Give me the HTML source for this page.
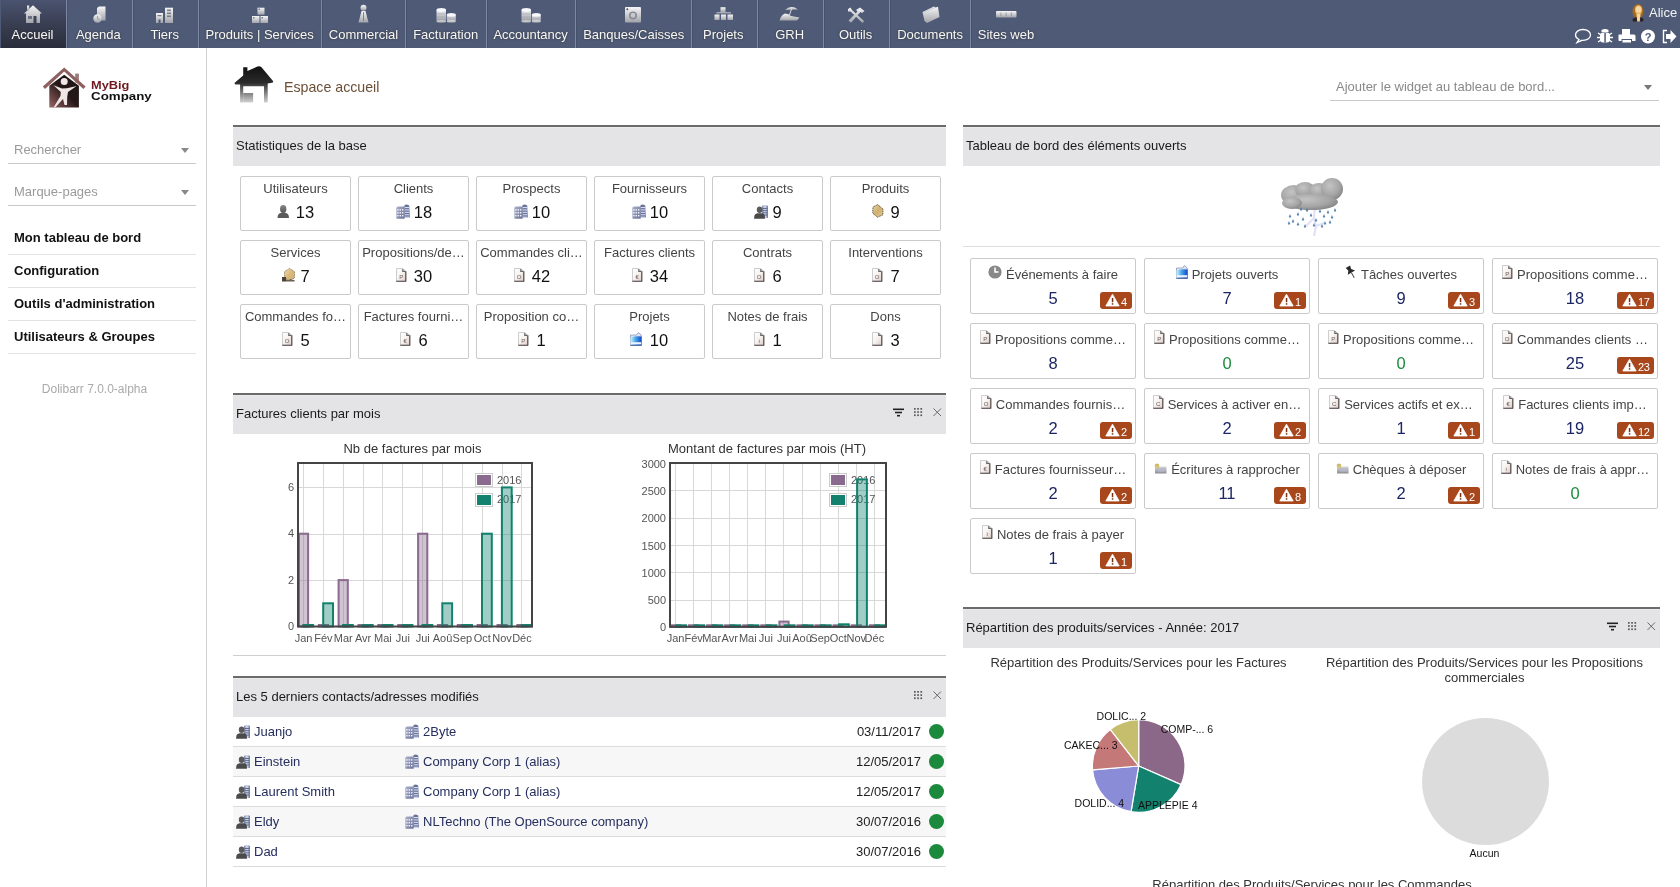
<!DOCTYPE html><html><head><meta charset="utf-8"><style>
html,body{margin:0;padding:0;width:1680px;height:887px;overflow:hidden;background:#fff;font-family:"Liberation Sans",sans-serif;}
.t{position:absolute;line-height:1;white-space:nowrap;}
.b{position:absolute;box-sizing:border-box;}
.s{position:absolute;overflow:visible;}
.ell{overflow:hidden;text-overflow:ellipsis;}
</style></head><body><div style="position:absolute;left:0;top:0;width:1680px;height:887px;overflow:hidden;will-change:transform;background:#fff">
<div class="b" style="left:0px;top:0px;width:1680px;height:48px;background:#4e5a76;"></div>
<div class="b" style="left:1px;top:0px;width:65px;height:48px;background:linear-gradient(#4a5370,#393e52 50%,#2a2e3b);"></div>
<div class="t" style="left:-67.50px;width:200px;text-align:center;top:28.00px;font-size:13px;color:#f8f8f8;font-weight:400;text-shadow:0 0 2px #333;">Accueil</div>
<div class="b" style="left:66px;top:0px;width:1px;height:48px;background:#7c87a2;"></div>
<div class="b" style="left:67px;top:0px;width:1px;height:48px;background:#46516b;"></div>
<div class="t" style="left:-1.70px;width:200px;text-align:center;top:28.00px;font-size:13px;color:#f8f8f8;font-weight:400;text-shadow:0 0 2px #333;">Agenda</div>
<div class="b" style="left:132px;top:0px;width:1px;height:48px;background:#7c87a2;"></div>
<div class="b" style="left:133px;top:0px;width:1px;height:48px;background:#46516b;"></div>
<div class="t" style="left:64.70px;width:200px;text-align:center;top:28.00px;font-size:13px;color:#f8f8f8;font-weight:400;text-shadow:0 0 2px #333;">Tiers</div>
<div class="b" style="left:198px;top:0px;width:1px;height:48px;background:#7c87a2;"></div>
<div class="b" style="left:199px;top:0px;width:1px;height:48px;background:#46516b;"></div>
<div class="t" style="left:159.70px;width:200px;text-align:center;top:28.00px;font-size:13px;color:#f8f8f8;font-weight:400;text-shadow:0 0 2px #333;">Produits | Services</div>
<div class="b" style="left:321px;top:0px;width:1px;height:48px;background:#7c87a2;"></div>
<div class="b" style="left:322px;top:0px;width:1px;height:48px;background:#46516b;"></div>
<div class="t" style="left:263.50px;width:200px;text-align:center;top:28.00px;font-size:13px;color:#f8f8f8;font-weight:400;text-shadow:0 0 2px #333;">Commercial</div>
<div class="b" style="left:405px;top:0px;width:1px;height:48px;background:#7c87a2;"></div>
<div class="b" style="left:406px;top:0px;width:1px;height:48px;background:#46516b;"></div>
<div class="t" style="left:345.70px;width:200px;text-align:center;top:28.00px;font-size:13px;color:#f8f8f8;font-weight:400;text-shadow:0 0 2px #333;">Facturation</div>
<div class="b" style="left:486px;top:0px;width:1px;height:48px;background:#7c87a2;"></div>
<div class="b" style="left:487px;top:0px;width:1px;height:48px;background:#46516b;"></div>
<div class="t" style="left:430.60px;width:200px;text-align:center;top:28.00px;font-size:13px;color:#f8f8f8;font-weight:400;text-shadow:0 0 2px #333;">Accountancy</div>
<div class="b" style="left:575px;top:0px;width:1px;height:48px;background:#7c87a2;"></div>
<div class="b" style="left:576px;top:0px;width:1px;height:48px;background:#46516b;"></div>
<div class="t" style="left:533.75px;width:200px;text-align:center;top:28.00px;font-size:13px;color:#f8f8f8;font-weight:400;text-shadow:0 0 2px #333;">Banques/Caisses</div>
<div class="b" style="left:691px;top:0px;width:1px;height:48px;background:#7c87a2;"></div>
<div class="b" style="left:692px;top:0px;width:1px;height:48px;background:#46516b;"></div>
<div class="t" style="left:623.25px;width:200px;text-align:center;top:28.00px;font-size:13px;color:#f8f8f8;font-weight:400;text-shadow:0 0 2px #333;">Projets</div>
<div class="b" style="left:757px;top:0px;width:1px;height:48px;background:#7c87a2;"></div>
<div class="b" style="left:758px;top:0px;width:1px;height:48px;background:#46516b;"></div>
<div class="t" style="left:689.60px;width:200px;text-align:center;top:28.00px;font-size:13px;color:#f8f8f8;font-weight:400;text-shadow:0 0 2px #333;">GRH</div>
<div class="b" style="left:823px;top:0px;width:1px;height:48px;background:#7c87a2;"></div>
<div class="b" style="left:824px;top:0px;width:1px;height:48px;background:#46516b;"></div>
<div class="t" style="left:755.60px;width:200px;text-align:center;top:28.00px;font-size:13px;color:#f8f8f8;font-weight:400;text-shadow:0 0 2px #333;">Outils</div>
<div class="b" style="left:889px;top:0px;width:1px;height:48px;background:#7c87a2;"></div>
<div class="b" style="left:890px;top:0px;width:1px;height:48px;background:#46516b;"></div>
<div class="t" style="left:830.10px;width:200px;text-align:center;top:28.00px;font-size:13px;color:#f8f8f8;font-weight:400;text-shadow:0 0 2px #333;">Documents</div>
<div class="b" style="left:970px;top:0px;width:1px;height:48px;background:#7c87a2;"></div>
<div class="b" style="left:971px;top:0px;width:1px;height:48px;background:#46516b;"></div>
<div class="t" style="left:906.00px;width:200px;text-align:center;top:28.00px;font-size:13px;color:#f8f8f8;font-weight:400;text-shadow:0 0 2px #333;">Sites web</div>
<svg class="s" style="left:0;top:0" width="1100" height="28" viewBox="0 0 1100 28">
<defs><linearGradient id="mg" x1="0" y1="0" x2="0" y2="1"><stop offset="0" stop-color="#f6f6f6"/><stop offset="1" stop-color="#a2a4aa"/></linearGradient>
<linearGradient id="mg2" x1="0" y1="0" x2="0" y2="1"><stop offset="0" stop-color="#f0f0f0"/><stop offset="1" stop-color="#9c9ea4"/></linearGradient></defs>
<g fill="url(#mg)">
<!-- house -->
<path d="M24 13.5 L33 5.2 L42 13.5 L40 13.5 L40 23 L36.5 23 L36.5 16 L33.5 16 L33.5 23 L26 23 L26 13.5 Z"/>
<rect x="27" y="5.5" width="2.2" height="5"/>
</g>
<rect x="28" y="16" width="4" height="3" fill="#6a7088"/>
<!-- agenda -->
<g fill="url(#mg)"><path d="M97 8 L99 6.5 L105.5 6.5 L105.5 20.5 L97 20.5 Z"/><circle cx="97.5" cy="18.5" r="4.2"/></g>
<path d="M97.5 15.8 L97.5 18.6 L99.5 19.6" stroke="#8a8e98" stroke-width=".8" fill="none"/>
<!-- tiers -->
<g fill="url(#mg)"><path d="M156 13 L163 13 L163 23 L160.5 23 L160.5 19.5 L158.5 19.5 L158.5 23 L156 23 Z"/><rect x="165" y="7.7" width="8" height="15.3"/></g>
<g fill="#7a7e8a"><rect x="157.5" y="15" width="4" height="1.2"/><rect x="167" y="9.5" width="4" height="1.6"/><rect x="167" y="12.5" width="4" height="1.6"/><rect x="167" y="15.5" width="4" height="1.6"/></g>
<!-- produits -->
<g fill="url(#mg)"><rect x="257.5" y="7.7" width="7" height="7"/><rect x="252" y="16" width="7.5" height="7"/><rect x="260.5" y="16" width="7.5" height="7"/></g>
<g fill="#7a7e8a"><rect x="258.5" y="8.5" width="1.5" height="1.5"/><rect x="253" y="17" width="1.5" height="1.5"/><rect x="261.5" y="17" width="1.5" height="1.5"/></g>
<!-- commercial -->
<g fill="url(#mg)"><circle cx="363.5" cy="7.8" r="3"/><path d="M361.5 11 L365.5 11 L368.5 22.5 L358.5 22.5 Z"/></g>
<path d="M363.5 12 L363.5 21" stroke="#6a6e7a" stroke-width=".8"/>
<!-- coins -->
<g fill="url(#mg)" opacity=".92"><rect x="436.5" y="10" width="9.5" height="11.5"/><ellipse cx="441.25" cy="21.5" rx="4.75" ry="1.2"/><rect x="446.8" y="14.8" width="9" height="6.7"/><ellipse cx="451.3" cy="21.5" rx="4.5" ry="1.2"/>
<rect x="521.5" y="10" width="9.5" height="11.5"/><ellipse cx="526.25" cy="21.5" rx="4.75" ry="1.2"/><rect x="531.8" y="14.8" width="9" height="6.7"/><ellipse cx="536.3" cy="21.5" rx="4.5" ry="1.2"/></g>
<g fill="#f6f8fc"><ellipse cx="441.25" cy="10" rx="4.75" ry="1.9"/><ellipse cx="451.3" cy="14.8" rx="4.5" ry="1.8"/><ellipse cx="526.25" cy="10" rx="4.75" ry="1.9"/><ellipse cx="536.3" cy="14.8" rx="4.5" ry="1.8"/></g>
<g stroke="#8a8e9a" stroke-width=".5" opacity=".7"><path d="M437 14 L445.5 14 M437 17 L445.5 17 M437 20 L445.5 20 M447.3 18 L455.3 18 M522 14 L530.5 14 M522 17 L530.5 17 M522 20 L530.5 20 M532.3 18 L540.3 18"/></g>
<!-- banques -->
<rect x="625" y="7" width="16" height="15.5" rx="1" fill="url(#mg)"/>
<circle cx="633" cy="15.5" r="3.2" fill="none" stroke="#888c96" stroke-width="1.6"/>
<circle cx="627.3" cy="9.3" r="1" fill="#555"/>
<!-- projets -->
<g fill="url(#mg)"><rect x="720.5" y="7.2" width="5" height="5"/><rect x="714.5" y="14.5" width="5" height="5.5"/><rect x="721" y="14.5" width="5" height="5.5"/><rect x="727.5" y="14.5" width="5.5" height="5.5"/><rect x="716.5" y="12.5" width="14.5" height="1"/></g>
<!-- grh -->
<g fill="url(#mg)"><path d="M785 10 Q791 4.5 798 9.5 Z"/><path d="M779.5 20.5 Q781 15 785 13.5 Q789 13.5 791 16 L799.5 17.5 L797 20.5 Z"/></g>
<path d="M791.5 9 L789.5 15" stroke="#e8e8e8" stroke-width=".9"/>
<!-- outils -->
<g fill="url(#mg)"><path d="M848 9 L850.5 7.5 L852 10 L864 21 L862.5 23 L850.5 11.5 L848 11.5 Z"/><path d="M853 16 L857.5 11.5 L856 10 L860 7.5 L864.5 11 L862 13 L860.5 12 L856 17 L851 22.8 L848.5 20.5 Z"/></g>
<!-- documents -->
<path d="M922.5 12 L934 6.5 L935.5 7.5 L938 6.8 L939.5 17 L927 23 L924.5 21 Z" fill="url(#mg)"/>
<path d="M923 12.5 L935 7.5" stroke="#c8c8cc" stroke-width=".8"/>
<!-- www -->
<rect x="996" y="11" width="20.5" height="6.5" rx="1" fill="url(#mg)"/>
<g fill="#8a8e98"><rect x="1000.5" y="12.5" width=".8" height="4"/><rect x="1005.7" y="12.5" width=".8" height="4"/><rect x="1010.9" y="12.5" width=".8" height="4"/></g>
</svg>
<div class="t" style="left:1649px;top:6.00px;font-size:13px;color:#f4f4f4;font-weight:400;">Alice</div>
<svg class="s" style="left:1631px;top:3px" width="14" height="19" viewBox="0 0 14 19"><defs><filter id="bl"><feGaussianBlur stdDeviation=".6"/></filter></defs><g filter="url(#bl)">
<ellipse cx="7" cy="8.5" rx="5.5" ry="7.5" fill="#a8681e"/>
<ellipse cx="7.5" cy="7" rx="3.6" ry="4.8" fill="#e6b868"/>
<path d="M1.5 16 Q4 14 6 14 L8.5 14 Q11 14 12.5 16 L12 18.5 L2 18.5 Z" fill="#2a2226"/>
<path d="M5.5 11 L9.5 11 L8.8 18.5 L6.2 18.5 Z" fill="#f0d8a0"/>
<ellipse cx="7.5" cy="6.5" rx="2.6" ry="3.2" fill="#f6d8a4"/>
</g></svg>
<div class="b" style="left:206px;top:48px;width:1px;height:839px;background:#d0d0d0;"></div>
<svg class="s" style="left:42px;top:66px" width="44" height="44" viewBox="0 0 44 44">
<defs><linearGradient id="lg1" x1="1" y1="0" x2="0" y2="1"><stop offset="0" stop-color="#1c1414"/><stop offset=".5" stop-color="#261818"/><stop offset=".8" stop-color="#6a4444"/><stop offset="1" stop-color="#9a6a6a"/></linearGradient></defs>
<rect x="33.2" y="7.6" width="3.7" height="9" fill="#9a7a7a"/>
<path d="M0.8 20.6 L22.2 1.6 L43.6 20.6 L41.4 23 L22.2 5.6 L3 23 Z" fill="#8e6060"/>
<path d="M7.3 19.7 L22.2 8.7 L36.9 19.7 L36.9 41.4 L7.3 41.4 Z" fill="url(#lg1)"/>
<circle cx="22.2" cy="15.4" r="3.5" fill="#f0e6e6"/>
<path d="M11.5 19.2 L20 22.5 L25 22.3 L34.6 20 L26 26 L25.2 31 L25 39 L22.5 39 L21 33 L13.5 41.3 L11.8 41 L18.5 30 L18.8 26 Z" fill="#f0e6e6"/>
</svg>
<div class="t" style="left:91px;top:80.11px;font-size:10.5px;color:#6e1a22;font-weight:700;transform:scaleX(1.22);transform-origin:0 0;">MyBig</div>
<div class="t" style="left:91px;top:91.11px;font-size:10.5px;color:#111;font-weight:700;transform:scaleX(1.27);transform-origin:0 0;">Company</div>
<div class="t" style="left:14px;top:143.00px;font-size:13px;color:#9a9a9a;font-weight:400;">Rechercher</div>
<div class="b" style="left:8px;top:163px;width:188px;height:1px;background:#c9c9c9;"></div>
<div class="b" style="left:181px;top:148px;width:0;height:0;border-left:4px solid transparent;border-right:4px solid transparent;border-top:5px solid #888;"></div>
<div class="t" style="left:14px;top:185.00px;font-size:13px;color:#9a9a9a;font-weight:400;">Marque-pages</div>
<div class="b" style="left:8px;top:205px;width:188px;height:1px;background:#c9c9c9;"></div>
<div class="b" style="left:181px;top:190px;width:0;height:0;border-left:4px solid transparent;border-right:4px solid transparent;border-top:5px solid #888;"></div>
<div class="t" style="left:14px;top:231.00px;font-size:13px;color:#111;font-weight:700;">Mon tableau de bord</div>
<div class="b" style="left:8px;top:254px;width:188px;height:1px;background:#e2e2e2;"></div>
<div class="t" style="left:14px;top:264.00px;font-size:13px;color:#111;font-weight:700;">Configuration</div>
<div class="b" style="left:8px;top:287px;width:188px;height:1px;background:#e2e2e2;"></div>
<div class="t" style="left:14px;top:297.00px;font-size:13px;color:#111;font-weight:700;">Outils d'administration</div>
<div class="b" style="left:8px;top:320px;width:188px;height:1px;background:#e2e2e2;"></div>
<div class="t" style="left:14px;top:330.00px;font-size:13px;color:#111;font-weight:700;">Utilisateurs &amp; Groupes</div>
<div class="b" style="left:8px;top:353px;width:188px;height:1px;background:#e2e2e2;"></div>
<div class="t" style="left:4.50px;width:180px;text-align:center;top:382.84px;font-size:12px;color:#aaaaaa;font-weight:400;">Dolibarr 7.0.0-alpha</div>
<svg class="s" style="left:233px;top:64px" width="42" height="40" viewBox="0 0 42 40">
<defs><linearGradient id="hg" gradientUnits="userSpaceOnUse" x1="0" y1="2" x2="0" y2="39"><stop offset="0" stop-color="#111"/><stop offset=".45" stop-color="#2a2a2a"/><stop offset=".7" stop-color="#777"/><stop offset="1" stop-color="#d4d4d4"/></linearGradient></defs>
<path d="M10.2 3.3 L14.4 3.3 L14.4 7 L24.5 2.6 Q26.4 1.8 28.3 3 L40 17 Q40.6 18.6 39 18.8 L34.7 19.6 L34.7 38.4 L31 38.4 L31 22.3 L10.2 22.3 L10.2 38.4 L7.1 38.4 L7.1 20.5 L2.5 20.5 Q1 20 2 18.6 L10.2 11.5 Z" fill="url(#hg)"/>
<rect x="10.2" y="29" width="9.9" height="9.4" fill="url(#hg)"/>
</svg>
<div class="t" style="left:284px;top:79.98px;font-size:14.2px;color:#6b4f37;font-weight:400;">Espace accueil</div>
<div class="t" style="left:1336px;top:80.30px;font-size:13px;color:#8a8a8a;font-weight:400;">Ajouter le widget au tableau de bord...</div>
<div class="b" style="left:1330px;top:100px;width:329px;height:1px;background:#c9c9c9;"></div>
<div class="b" style="left:1644px;top:85px;width:0;height:0;border-left:4px solid transparent;border-right:4px solid transparent;border-top:5px solid #777;"></div>
<div class="b" style="left:233px;top:125px;width:713px;height:2px;background:#6b6b6b;"></div>
<div class="b" style="left:233px;top:127px;width:713px;height:39px;background:#e4e4e6;"></div>
<div class="b" style="left:233px;top:127px;width:713px;height:1px;background:#ebebed;"></div>
<div class="t" style="left:236px;top:139.00px;font-size:13px;color:#1a1a1a;font-weight:400;">Statistiques de la base</div>
<div class="b" style="left:240px;top:176px;width:111px;height:55px;border:1px solid #cacaca;border-radius:2px;background:#fff;"></div>
<div class="t" style="left:220px;width:151px;text-align:center;top:181.50px;font-size:13px;color:#444;">Utilisateurs</div>
<svg class="s" style="left:277px;top:205px" width="13" height="14" viewBox="0 0 13 14"><defs><linearGradient id="gu" x1="0" y1="0" x2="0" y2="1"><stop offset="0" stop-color="#888"/><stop offset="1" stop-color="#555"/></linearGradient></defs><ellipse cx="6.2" cy="4" rx="3.2" ry="4" fill="url(#gu)"/><path d="M0.5 13 Q0.5 8 4.5 7.8 L8 7.8 Q12 8 12 13 Z" fill="#5a5a5a"/></svg>
<div class="t" style="left:295.82px;top:204.23px;font-size:16.5px;color:#111;font-weight:400;">13</div>
<div class="b" style="left:358px;top:176px;width:111px;height:55px;border:1px solid #cacaca;border-radius:2px;background:#fff;"></div>
<div class="t" style="left:338px;width:151px;text-align:center;top:181.50px;font-size:13px;color:#444;">Clients</div>
<svg class="s" style="left:396px;top:204px" width="14" height="15" viewBox="0 0 14 15"><defs><linearGradient id="gco" x1="0" y1="0" x2="1" y2="1"><stop offset="0" stop-color="#a8aecb"/><stop offset="1" stop-color="#6c7396"/></linearGradient></defs><path d="M8.3 1.6 Q9 0.6 11 0.6 L13.2 1.6 L13.9 13.5 L8.3 13.5 Z" fill="#6a7296"/><rect x="8.8" y="3.0" width="4.4" height="1.1" fill="#d4dcf8"/><rect x="8.8" y="5.4" width="4.4" height="1.1" fill="#d4dcf8"/><rect x="8.8" y="7.8" width="4.4" height="1.1" fill="#d4dcf8"/><rect x="8.8" y="10.2" width="4.4" height="1.1" fill="#d4dcf8"/><rect x="8.8" y="12.6" width="4.4" height="1.1" fill="#d4dcf8"/><path d="M0.3 4 Q0.5 2.8 2 2.6 L8.6 2.6 L8.6 14.7 L0.5 14.7 Z" fill="url(#gco)"/><rect x="1.2" y="5.2" width="1.4" height="1.4" fill="#f4f6ff"/><rect x="1.2" y="8.1" width="1.4" height="1.4" fill="#f4f6ff"/><rect x="1.2" y="11.0" width="1.4" height="1.4" fill="#f4f6ff"/><rect x="3.6" y="5.2" width="1.4" height="1.4" fill="#f4f6ff"/><rect x="3.6" y="8.1" width="1.4" height="1.4" fill="#f4f6ff"/><rect x="3.6" y="11.0" width="1.4" height="1.4" fill="#f4f6ff"/><rect x="6.0" y="5.2" width="1.4" height="1.4" fill="#f4f6ff"/><rect x="6.0" y="8.1" width="1.4" height="1.4" fill="#f4f6ff"/><rect x="6.0" y="11.0" width="1.4" height="1.4" fill="#f4f6ff"/></svg>
<div class="t" style="left:413.82px;top:204.23px;font-size:16.5px;color:#111;font-weight:400;">18</div>
<div class="b" style="left:476px;top:176px;width:111px;height:55px;border:1px solid #cacaca;border-radius:2px;background:#fff;"></div>
<div class="t" style="left:456px;width:151px;text-align:center;top:181.50px;font-size:13px;color:#444;">Prospects</div>
<svg class="s" style="left:514px;top:204px" width="14" height="15" viewBox="0 0 14 15"><defs><linearGradient id="gco" x1="0" y1="0" x2="1" y2="1"><stop offset="0" stop-color="#a8aecb"/><stop offset="1" stop-color="#6c7396"/></linearGradient></defs><path d="M8.3 1.6 Q9 0.6 11 0.6 L13.2 1.6 L13.9 13.5 L8.3 13.5 Z" fill="#6a7296"/><rect x="8.8" y="3.0" width="4.4" height="1.1" fill="#d4dcf8"/><rect x="8.8" y="5.4" width="4.4" height="1.1" fill="#d4dcf8"/><rect x="8.8" y="7.8" width="4.4" height="1.1" fill="#d4dcf8"/><rect x="8.8" y="10.2" width="4.4" height="1.1" fill="#d4dcf8"/><rect x="8.8" y="12.6" width="4.4" height="1.1" fill="#d4dcf8"/><path d="M0.3 4 Q0.5 2.8 2 2.6 L8.6 2.6 L8.6 14.7 L0.5 14.7 Z" fill="url(#gco)"/><rect x="1.2" y="5.2" width="1.4" height="1.4" fill="#f4f6ff"/><rect x="1.2" y="8.1" width="1.4" height="1.4" fill="#f4f6ff"/><rect x="1.2" y="11.0" width="1.4" height="1.4" fill="#f4f6ff"/><rect x="3.6" y="5.2" width="1.4" height="1.4" fill="#f4f6ff"/><rect x="3.6" y="8.1" width="1.4" height="1.4" fill="#f4f6ff"/><rect x="3.6" y="11.0" width="1.4" height="1.4" fill="#f4f6ff"/><rect x="6.0" y="5.2" width="1.4" height="1.4" fill="#f4f6ff"/><rect x="6.0" y="8.1" width="1.4" height="1.4" fill="#f4f6ff"/><rect x="6.0" y="11.0" width="1.4" height="1.4" fill="#f4f6ff"/></svg>
<div class="t" style="left:531.82px;top:204.23px;font-size:16.5px;color:#111;font-weight:400;">10</div>
<div class="b" style="left:594px;top:176px;width:111px;height:55px;border:1px solid #cacaca;border-radius:2px;background:#fff;"></div>
<div class="t" style="left:574px;width:151px;text-align:center;top:181.50px;font-size:13px;color:#444;">Fournisseurs</div>
<svg class="s" style="left:632px;top:204px" width="14" height="15" viewBox="0 0 14 15"><defs><linearGradient id="gco" x1="0" y1="0" x2="1" y2="1"><stop offset="0" stop-color="#a8aecb"/><stop offset="1" stop-color="#6c7396"/></linearGradient></defs><path d="M8.3 1.6 Q9 0.6 11 0.6 L13.2 1.6 L13.9 13.5 L8.3 13.5 Z" fill="#6a7296"/><rect x="8.8" y="3.0" width="4.4" height="1.1" fill="#d4dcf8"/><rect x="8.8" y="5.4" width="4.4" height="1.1" fill="#d4dcf8"/><rect x="8.8" y="7.8" width="4.4" height="1.1" fill="#d4dcf8"/><rect x="8.8" y="10.2" width="4.4" height="1.1" fill="#d4dcf8"/><rect x="8.8" y="12.6" width="4.4" height="1.1" fill="#d4dcf8"/><path d="M0.3 4 Q0.5 2.8 2 2.6 L8.6 2.6 L8.6 14.7 L0.5 14.7 Z" fill="url(#gco)"/><rect x="1.2" y="5.2" width="1.4" height="1.4" fill="#f4f6ff"/><rect x="1.2" y="8.1" width="1.4" height="1.4" fill="#f4f6ff"/><rect x="1.2" y="11.0" width="1.4" height="1.4" fill="#f4f6ff"/><rect x="3.6" y="5.2" width="1.4" height="1.4" fill="#f4f6ff"/><rect x="3.6" y="8.1" width="1.4" height="1.4" fill="#f4f6ff"/><rect x="3.6" y="11.0" width="1.4" height="1.4" fill="#f4f6ff"/><rect x="6.0" y="5.2" width="1.4" height="1.4" fill="#f4f6ff"/><rect x="6.0" y="8.1" width="1.4" height="1.4" fill="#f4f6ff"/><rect x="6.0" y="11.0" width="1.4" height="1.4" fill="#f4f6ff"/></svg>
<div class="t" style="left:649.82px;top:204.23px;font-size:16.5px;color:#111;font-weight:400;">10</div>
<div class="b" style="left:712px;top:176px;width:111px;height:55px;border:1px solid #cacaca;border-radius:2px;background:#fff;"></div>
<div class="t" style="left:692px;width:151px;text-align:center;top:181.50px;font-size:13px;color:#444;">Contacts</div>
<svg class="s" style="left:754px;top:204px" width="15" height="15" viewBox="0 0 15 15"><defs><linearGradient id="gc" x1="0" y1="0" x2="1" y2="0"><stop offset="0" stop-color="#7a86a8"/><stop offset=".5" stop-color="#d8e0f0"/><stop offset="1" stop-color="#6a7698"/></linearGradient></defs><path d="M8 2 Q11 0 14 2 L14 14 L8 14 Z" fill="url(#gc)"/><g fill="#5a6688"><rect x="8.5" y="4" width="5" height=".9"/><rect x="8.5" y="6.2" width="5" height=".9"/><rect x="8.5" y="8.4" width="5" height=".9"/><rect x="8.5" y="10.6" width="5" height=".9"/></g><ellipse cx="5.6" cy="5.8" rx="2.8" ry="3.3" fill="#5a5a5a"/><path d="M0 14.8 L0.5 11.5 Q1 9.5 3.5 9.3 L8 9.3 Q10.5 9.5 10.8 11.5 L11 14.8 Z" fill="#4a4a4a"/></svg>
<div class="t" style="left:772.41px;top:204.23px;font-size:16.5px;color:#111;font-weight:400;">9</div>
<div class="b" style="left:830px;top:176px;width:111px;height:55px;border:1px solid #cacaca;border-radius:2px;background:#fff;"></div>
<div class="t" style="left:810px;width:151px;text-align:center;top:181.50px;font-size:13px;color:#444;">Produits</div>
<svg class="s" style="left:872px;top:204px" width="12" height="14" viewBox="0 0 12 14"><defs><linearGradient id="gpr" x1="0" y1="0" x2="1" y2="1"><stop offset="0" stop-color="#e4d4a4"/><stop offset=".5" stop-color="#d0b070"/><stop offset="1" stop-color="#e0cc98"/></linearGradient></defs><path d="M5.7 0.6 L11 5 L10.8 10.9 L5.4 13.2 L0.7 9.2 L1 2.9 Z" fill="url(#gpr)" stroke="#3a3020" stroke-width=".8" stroke-dasharray="1.1 .7"/></svg>
<div class="t" style="left:890.41px;top:204.23px;font-size:16.5px;color:#111;font-weight:400;">9</div>
<div class="b" style="left:240px;top:240px;width:111px;height:55px;border:1px solid #cacaca;border-radius:2px;background:#fff;"></div>
<div class="t" style="left:220px;width:151px;text-align:center;top:245.50px;font-size:13px;color:#444;">Services</div>
<svg class="s" style="left:282px;top:268px" width="14" height="14" viewBox="0 0 14 14"><defs><linearGradient id="gs" x1="0" y1="0" x2="1" y2="1"><stop offset="0" stop-color="#eee0b0"/><stop offset=".5" stop-color="#dcb878"/><stop offset="1" stop-color="#c8b078"/></linearGradient></defs><path d="M7.5 0.5 L12.5 3.5 L12.5 10 L7.5 12.5 L2.5 10 L2.5 3.5 Z" fill="url(#gs)" stroke="#5a4a30" stroke-width=".6" stroke-dasharray="1 .6"/><rect x="0" y="9" width="4" height="4.5" fill="#4a4438"/><path d="M4 11.5 Q7 12.5 8.5 11 Q10 12 12.8 12.3 L12.5 13.5 L4 13.5 Z" fill="#6a6050"/></svg>
<div class="t" style="left:300.41px;top:268.23px;font-size:16.5px;color:#111;font-weight:400;">7</div>
<div class="b" style="left:358px;top:240px;width:111px;height:55px;border:1px solid #cacaca;border-radius:2px;background:#fff;"></div>
<div class="t" style="left:338px;width:151px;text-align:center;top:245.50px;font-size:13px;color:#444;">Propositions/de…</div>
<svg class="s" style="left:396px;top:268px" width="11" height="14" viewBox="0 0 11 14"><defs><linearGradient id="gd" x1="0" y1="0" x2="1" y2="1"><stop offset="0" stop-color="#ffffff"/><stop offset=".5" stop-color="#f6f2f0"/><stop offset="1" stop-color="#dccbc4"/></linearGradient></defs><path d="M0.5 0.5 L6.8 0.5 L9.8 3.5 L9.8 13.2 L0.5 13.2 Z" fill="url(#gd)" stroke="#cdcdcd" stroke-width="1"/><path d="M9.8 3.2 L9.8 13.3 L0.3 13.3" stroke="#4e4040" stroke-width="1.1" fill="none"/><path d="M6.8 1 L6.8 3.3 L9.3 3.3" stroke="#666" stroke-width="1.2" fill="none"/><text x="5.2" y="11.2" font-size="6" font-family="Liberation Sans" fill="#6a5a55" text-anchor="middle">P</text></svg>
<div class="t" style="left:413.82px;top:268.23px;font-size:16.5px;color:#111;font-weight:400;">30</div>
<div class="b" style="left:476px;top:240px;width:111px;height:55px;border:1px solid #cacaca;border-radius:2px;background:#fff;"></div>
<div class="t" style="left:456px;width:151px;text-align:center;top:245.50px;font-size:13px;color:#444;">Commandes cli…</div>
<svg class="s" style="left:514px;top:268px" width="11" height="14" viewBox="0 0 11 14"><defs><linearGradient id="gd" x1="0" y1="0" x2="1" y2="1"><stop offset="0" stop-color="#ffffff"/><stop offset=".5" stop-color="#f6f2f0"/><stop offset="1" stop-color="#dccbc4"/></linearGradient></defs><path d="M0.5 0.5 L6.8 0.5 L9.8 3.5 L9.8 13.2 L0.5 13.2 Z" fill="url(#gd)" stroke="#cdcdcd" stroke-width="1"/><path d="M9.8 3.2 L9.8 13.3 L0.3 13.3" stroke="#4e4040" stroke-width="1.1" fill="none"/><path d="M6.8 1 L6.8 3.3 L9.3 3.3" stroke="#666" stroke-width="1.2" fill="none"/><text x="5.2" y="11.2" font-size="6" font-family="Liberation Sans" fill="#6a5a55" text-anchor="middle">O</text></svg>
<div class="t" style="left:531.82px;top:268.23px;font-size:16.5px;color:#111;font-weight:400;">42</div>
<div class="b" style="left:594px;top:240px;width:111px;height:55px;border:1px solid #cacaca;border-radius:2px;background:#fff;"></div>
<div class="t" style="left:574px;width:151px;text-align:center;top:245.50px;font-size:13px;color:#444;">Factures clients</div>
<svg class="s" style="left:632px;top:268px" width="11" height="14" viewBox="0 0 11 14"><defs><linearGradient id="gd" x1="0" y1="0" x2="1" y2="1"><stop offset="0" stop-color="#ffffff"/><stop offset=".5" stop-color="#f6f2f0"/><stop offset="1" stop-color="#dccbc4"/></linearGradient></defs><path d="M0.5 0.5 L6.8 0.5 L9.8 3.5 L9.8 13.2 L0.5 13.2 Z" fill="url(#gd)" stroke="#cdcdcd" stroke-width="1"/><path d="M9.8 3.2 L9.8 13.3 L0.3 13.3" stroke="#4e4040" stroke-width="1.1" fill="none"/><path d="M6.8 1 L6.8 3.3 L9.3 3.3" stroke="#666" stroke-width="1.2" fill="none"/><text x="5.2" y="11.2" font-size="6" font-family="Liberation Sans" fill="#6a5a55" text-anchor="middle">€</text></svg>
<div class="t" style="left:649.82px;top:268.23px;font-size:16.5px;color:#111;font-weight:400;">34</div>
<div class="b" style="left:712px;top:240px;width:111px;height:55px;border:1px solid #cacaca;border-radius:2px;background:#fff;"></div>
<div class="t" style="left:692px;width:151px;text-align:center;top:245.50px;font-size:13px;color:#444;">Contrats</div>
<svg class="s" style="left:754px;top:268px" width="11" height="14" viewBox="0 0 11 14"><defs><linearGradient id="gd" x1="0" y1="0" x2="1" y2="1"><stop offset="0" stop-color="#ffffff"/><stop offset=".5" stop-color="#f6f2f0"/><stop offset="1" stop-color="#dccbc4"/></linearGradient></defs><path d="M0.5 0.5 L6.8 0.5 L9.8 3.5 L9.8 13.2 L0.5 13.2 Z" fill="url(#gd)" stroke="#cdcdcd" stroke-width="1"/><path d="M9.8 3.2 L9.8 13.3 L0.3 13.3" stroke="#4e4040" stroke-width="1.1" fill="none"/><path d="M6.8 1 L6.8 3.3 L9.3 3.3" stroke="#666" stroke-width="1.2" fill="none"/><text x="5.2" y="11.2" font-size="6" font-family="Liberation Sans" fill="#6a5a55" text-anchor="middle">O</text></svg>
<div class="t" style="left:772.41px;top:268.23px;font-size:16.5px;color:#111;font-weight:400;">6</div>
<div class="b" style="left:830px;top:240px;width:111px;height:55px;border:1px solid #cacaca;border-radius:2px;background:#fff;"></div>
<div class="t" style="left:810px;width:151px;text-align:center;top:245.50px;font-size:13px;color:#444;">Interventions</div>
<svg class="s" style="left:872px;top:268px" width="11" height="14" viewBox="0 0 11 14"><defs><linearGradient id="gd" x1="0" y1="0" x2="1" y2="1"><stop offset="0" stop-color="#ffffff"/><stop offset=".5" stop-color="#f6f2f0"/><stop offset="1" stop-color="#dccbc4"/></linearGradient></defs><path d="M0.5 0.5 L6.8 0.5 L9.8 3.5 L9.8 13.2 L0.5 13.2 Z" fill="url(#gd)" stroke="#cdcdcd" stroke-width="1"/><path d="M9.8 3.2 L9.8 13.3 L0.3 13.3" stroke="#4e4040" stroke-width="1.1" fill="none"/><path d="M6.8 1 L6.8 3.3 L9.3 3.3" stroke="#666" stroke-width="1.2" fill="none"/><text x="5.2" y="11.2" font-size="6" font-family="Liberation Sans" fill="#6a5a55" text-anchor="middle">O</text></svg>
<div class="t" style="left:890.41px;top:268.23px;font-size:16.5px;color:#111;font-weight:400;">7</div>
<div class="b" style="left:240px;top:304px;width:111px;height:55px;border:1px solid #cacaca;border-radius:2px;background:#fff;"></div>
<div class="t" style="left:220px;width:151px;text-align:center;top:309.50px;font-size:13px;color:#444;">Commandes fo…</div>
<svg class="s" style="left:282px;top:332px" width="11" height="14" viewBox="0 0 11 14"><defs><linearGradient id="gd" x1="0" y1="0" x2="1" y2="1"><stop offset="0" stop-color="#ffffff"/><stop offset=".5" stop-color="#f6f2f0"/><stop offset="1" stop-color="#dccbc4"/></linearGradient></defs><path d="M0.5 0.5 L6.8 0.5 L9.8 3.5 L9.8 13.2 L0.5 13.2 Z" fill="url(#gd)" stroke="#cdcdcd" stroke-width="1"/><path d="M9.8 3.2 L9.8 13.3 L0.3 13.3" stroke="#4e4040" stroke-width="1.1" fill="none"/><path d="M6.8 1 L6.8 3.3 L9.3 3.3" stroke="#666" stroke-width="1.2" fill="none"/><text x="5.2" y="11.2" font-size="6" font-family="Liberation Sans" fill="#6a5a55" text-anchor="middle">O</text></svg>
<div class="t" style="left:300.41px;top:332.23px;font-size:16.5px;color:#111;font-weight:400;">5</div>
<div class="b" style="left:358px;top:304px;width:111px;height:55px;border:1px solid #cacaca;border-radius:2px;background:#fff;"></div>
<div class="t" style="left:338px;width:151px;text-align:center;top:309.50px;font-size:13px;color:#444;">Factures fourni…</div>
<svg class="s" style="left:400px;top:332px" width="11" height="14" viewBox="0 0 11 14"><defs><linearGradient id="gd" x1="0" y1="0" x2="1" y2="1"><stop offset="0" stop-color="#ffffff"/><stop offset=".5" stop-color="#f6f2f0"/><stop offset="1" stop-color="#dccbc4"/></linearGradient></defs><path d="M0.5 0.5 L6.8 0.5 L9.8 3.5 L9.8 13.2 L0.5 13.2 Z" fill="url(#gd)" stroke="#cdcdcd" stroke-width="1"/><path d="M9.8 3.2 L9.8 13.3 L0.3 13.3" stroke="#4e4040" stroke-width="1.1" fill="none"/><path d="M6.8 1 L6.8 3.3 L9.3 3.3" stroke="#666" stroke-width="1.2" fill="none"/><text x="5.2" y="11.2" font-size="6" font-family="Liberation Sans" fill="#6a5a55" text-anchor="middle">€</text></svg>
<div class="t" style="left:418.41px;top:332.23px;font-size:16.5px;color:#111;font-weight:400;">6</div>
<div class="b" style="left:476px;top:304px;width:111px;height:55px;border:1px solid #cacaca;border-radius:2px;background:#fff;"></div>
<div class="t" style="left:456px;width:151px;text-align:center;top:309.50px;font-size:13px;color:#444;">Proposition co…</div>
<svg class="s" style="left:518px;top:332px" width="11" height="14" viewBox="0 0 11 14"><defs><linearGradient id="gd" x1="0" y1="0" x2="1" y2="1"><stop offset="0" stop-color="#ffffff"/><stop offset=".5" stop-color="#f6f2f0"/><stop offset="1" stop-color="#dccbc4"/></linearGradient></defs><path d="M0.5 0.5 L6.8 0.5 L9.8 3.5 L9.8 13.2 L0.5 13.2 Z" fill="url(#gd)" stroke="#cdcdcd" stroke-width="1"/><path d="M9.8 3.2 L9.8 13.3 L0.3 13.3" stroke="#4e4040" stroke-width="1.1" fill="none"/><path d="M6.8 1 L6.8 3.3 L9.3 3.3" stroke="#666" stroke-width="1.2" fill="none"/><text x="5.2" y="11.2" font-size="6" font-family="Liberation Sans" fill="#6a5a55" text-anchor="middle">P</text></svg>
<div class="t" style="left:536.41px;top:332.23px;font-size:16.5px;color:#111;font-weight:400;">1</div>
<div class="b" style="left:594px;top:304px;width:111px;height:55px;border:1px solid #cacaca;border-radius:2px;background:#fff;"></div>
<div class="t" style="left:574px;width:151px;text-align:center;top:309.50px;font-size:13px;color:#444;">Projets</div>
<svg class="s" style="left:630px;top:332px" width="12" height="14" viewBox="0 0 12 14"><defs><linearGradient id="gp" x1="0" y1="0" x2="1" y2="0"><stop offset="0" stop-color="#c8f4ff"/><stop offset=".45" stop-color="#4aa8e8"/><stop offset="1" stop-color="#1048c8"/></linearGradient></defs><path d="M0.5 3 L6.5 3 L8.3 0.6 L10.5 2.2 L11.5 4 L11.5 13.2 L0.5 13.2 Z" fill="#dde4f4" stroke="#6a78a8" stroke-width=".6"/><path d="M0.5 5.5 Q6 3.8 11.5 4.6 L11.5 13.2 L0.5 13.2 Z" fill="url(#gp)"/><rect x="0.8" y="10.2" width="10.4" height="2.2" fill="#eef2ff"/><path d="M0.4 13.3 L11.6 13.3" stroke="#4a5a9a" stroke-width="1"/></svg>
<div class="t" style="left:649.82px;top:332.23px;font-size:16.5px;color:#111;font-weight:400;">10</div>
<div class="b" style="left:712px;top:304px;width:111px;height:55px;border:1px solid #cacaca;border-radius:2px;background:#fff;"></div>
<div class="t" style="left:692px;width:151px;text-align:center;top:309.50px;font-size:13px;color:#444;">Notes de frais</div>
<svg class="s" style="left:754px;top:332px" width="11" height="14" viewBox="0 0 11 14"><defs><linearGradient id="gd" x1="0" y1="0" x2="1" y2="1"><stop offset="0" stop-color="#ffffff"/><stop offset=".5" stop-color="#f6f2f0"/><stop offset="1" stop-color="#dccbc4"/></linearGradient></defs><path d="M0.5 0.5 L6.8 0.5 L9.8 3.5 L9.8 13.2 L0.5 13.2 Z" fill="url(#gd)" stroke="#cdcdcd" stroke-width="1"/><path d="M9.8 3.2 L9.8 13.3 L0.3 13.3" stroke="#4e4040" stroke-width="1.1" fill="none"/><path d="M6.8 1 L6.8 3.3 L9.3 3.3" stroke="#666" stroke-width="1.2" fill="none"/><text x="5.2" y="11.2" font-size="6" font-family="Liberation Sans" fill="#6a5a55" text-anchor="middle">i</text></svg>
<div class="t" style="left:772.41px;top:332.23px;font-size:16.5px;color:#111;font-weight:400;">1</div>
<div class="b" style="left:830px;top:304px;width:111px;height:55px;border:1px solid #cacaca;border-radius:2px;background:#fff;"></div>
<div class="t" style="left:810px;width:151px;text-align:center;top:309.50px;font-size:13px;color:#444;">Dons</div>
<svg class="s" style="left:872px;top:332px" width="11" height="14" viewBox="0 0 11 14"><defs><linearGradient id="gd" x1="0" y1="0" x2="1" y2="1"><stop offset="0" stop-color="#ffffff"/><stop offset=".5" stop-color="#f6f2f0"/><stop offset="1" stop-color="#dccbc4"/></linearGradient></defs><path d="M0.5 0.5 L6.8 0.5 L9.8 3.5 L9.8 13.2 L0.5 13.2 Z" fill="url(#gd)" stroke="#cdcdcd" stroke-width="1"/><path d="M9.8 3.2 L9.8 13.3 L0.3 13.3" stroke="#4e4040" stroke-width="1.1" fill="none"/><path d="M6.8 1 L6.8 3.3 L9.3 3.3" stroke="#666" stroke-width="1.2" fill="none"/></svg>
<div class="t" style="left:890.41px;top:332.23px;font-size:16.5px;color:#111;font-weight:400;">3</div>
<div class="b" style="left:233px;top:393px;width:713px;height:2px;background:#6b6b6b;"></div>
<div class="b" style="left:233px;top:395px;width:713px;height:39px;background:#e4e4e6;"></div>
<div class="b" style="left:233px;top:395px;width:713px;height:1px;background:#ebebed;"></div>
<div class="t" style="left:236px;top:407.00px;font-size:13px;color:#1a1a1a;font-weight:400;">Factures clients par mois</div>
<svg class="s" style="left:893px;top:408px" width="11" height="9" viewBox="0 0 11 9"><rect x="0" y="0.5" width="11" height="1.6" fill="#222"/><rect x="2" y="3.7" width="7" height="1.6" fill="#222"/><rect x="4" y="6.9" width="3" height="1.6" fill="#222"/></svg>
<svg class="s" style="left:914px;top:408px" width="9" height="9" viewBox="0 0 9 9"><rect x="0.0" y="0.0" width="1.7" height="1.7" fill="#5a5a5a"/><rect x="0.0" y="3.2" width="1.7" height="1.7" fill="#5a5a5a"/><rect x="0.0" y="6.4" width="1.7" height="1.7" fill="#5a5a5a"/><rect x="3.2" y="0.0" width="1.7" height="1.7" fill="#5a5a5a"/><rect x="3.2" y="3.2" width="1.7" height="1.7" fill="#5a5a5a"/><rect x="3.2" y="6.4" width="1.7" height="1.7" fill="#5a5a5a"/><rect x="6.4" y="0.0" width="1.7" height="1.7" fill="#5a5a5a"/><rect x="6.4" y="3.2" width="1.7" height="1.7" fill="#5a5a5a"/><rect x="6.4" y="6.4" width="1.7" height="1.7" fill="#5a5a5a"/></svg>
<svg class="s" style="left:933px;top:408px" width="9" height="9" viewBox="0 0 9 9"><path d="M0.5 0.5 L8 8 M8 0.5 L0.5 8" stroke="#5a5a5a" stroke-width=".9"/></svg>
<div class="b" style="left:233px;top:655px;width:713px;height:1px;background:#cfcfcf;"></div>
<div class="t" style="left:262.50px;width:300px;text-align:center;top:441.70px;font-size:13px;color:#333;font-weight:400;">Nb de factures par mois</div>
<svg class="s" style="left:0;top:0" width="1680" height="887"><line x1="298" y1="626.5" x2="532" y2="626.5" stroke="#d8d8d8" stroke-width="1"/><line x1="298" y1="580.5" x2="532" y2="580.5" stroke="#d8d8d8" stroke-width="1"/><line x1="298" y1="534.5" x2="532" y2="534.5" stroke="#d8d8d8" stroke-width="1"/><line x1="298" y1="487.5" x2="532" y2="487.5" stroke="#d8d8d8" stroke-width="1"/><line x1="303.5" y1="463" x2="303.5" y2="626.5" stroke="#d8d8d8" stroke-width="1"/><line x1="323.5" y1="463" x2="323.5" y2="626.5" stroke="#d8d8d8" stroke-width="1"/><line x1="343.5" y1="463" x2="343.5" y2="626.5" stroke="#d8d8d8" stroke-width="1"/><line x1="363.5" y1="463" x2="363.5" y2="626.5" stroke="#d8d8d8" stroke-width="1"/><line x1="382.5" y1="463" x2="382.5" y2="626.5" stroke="#d8d8d8" stroke-width="1"/><line x1="402.5" y1="463" x2="402.5" y2="626.5" stroke="#d8d8d8" stroke-width="1"/><line x1="422.5" y1="463" x2="422.5" y2="626.5" stroke="#d8d8d8" stroke-width="1"/><line x1="442.5" y1="463" x2="442.5" y2="626.5" stroke="#d8d8d8" stroke-width="1"/><line x1="462.5" y1="463" x2="462.5" y2="626.5" stroke="#d8d8d8" stroke-width="1"/><line x1="482.5" y1="463" x2="482.5" y2="626.5" stroke="#d8d8d8" stroke-width="1"/><line x1="502.5" y1="463" x2="502.5" y2="626.5" stroke="#d8d8d8" stroke-width="1"/><line x1="521.5" y1="463" x2="521.5" y2="626.5" stroke="#d8d8d8" stroke-width="1"/><rect x="475.5" y="473.5" width="17" height="13" fill="#fff" fill-opacity=".85" stroke="#ccc" stroke-width="1"/><rect x="477.0" y="475" width="14" height="10" fill="#8a6a8e"/><rect x="475.5" y="493.5" width="17" height="13" fill="#fff" fill-opacity=".85" stroke="#ccc" stroke-width="1"/><rect x="477.0" y="495" width="14" height="10" fill="#12826e"/><text x="497.0" y="483.5" font-family="Liberation Sans" font-size="11" fill="#545454">2016</text><text x="497.0" y="503.2" font-family="Liberation Sans" font-size="11" fill="#545454">2017</text><rect x="299.0" y="533.7" width="9.1" height="92.8" fill="#8a6a8e" fill-opacity=".4" stroke="#8a6a8e" stroke-width="2"/><rect x="318.8" y="625.0" width="9.2" height="1.5" fill="#8a6a8e" fill-opacity=".4" stroke="#8a6a8e" stroke-width="2"/><rect x="338.6" y="580.1" width="9.2" height="46.4" fill="#8a6a8e" fill-opacity=".4" stroke="#8a6a8e" stroke-width="2"/><rect x="358.5" y="625.0" width="9.2" height="1.5" fill="#8a6a8e" fill-opacity=".4" stroke="#8a6a8e" stroke-width="2"/><rect x="378.3" y="625.0" width="9.2" height="1.5" fill="#8a6a8e" fill-opacity=".4" stroke="#8a6a8e" stroke-width="2"/><rect x="398.2" y="625.0" width="9.2" height="1.5" fill="#8a6a8e" fill-opacity=".4" stroke="#8a6a8e" stroke-width="2"/><rect x="418.1" y="533.7" width="9.2" height="92.8" fill="#8a6a8e" fill-opacity=".4" stroke="#8a6a8e" stroke-width="2"/><rect x="437.9" y="625.0" width="9.2" height="1.5" fill="#8a6a8e" fill-opacity=".4" stroke="#8a6a8e" stroke-width="2"/><rect x="457.8" y="625.0" width="9.2" height="1.5" fill="#8a6a8e" fill-opacity=".4" stroke="#8a6a8e" stroke-width="2"/><rect x="477.6" y="625.0" width="9.2" height="1.5" fill="#8a6a8e" fill-opacity=".4" stroke="#8a6a8e" stroke-width="2"/><rect x="497.5" y="625.0" width="9.2" height="1.5" fill="#8a6a8e" fill-opacity=".4" stroke="#8a6a8e" stroke-width="2"/><rect x="517.4" y="625.0" width="9.2" height="1.5" fill="#8a6a8e" fill-opacity=".4" stroke="#8a6a8e" stroke-width="2"/><rect x="303.3" y="625.0" width="9.8" height="1.5" fill="#12826e" fill-opacity=".4" stroke="#12826e" stroke-width="2"/><rect x="323.2" y="603.3" width="9.8" height="23.2" fill="#12826e" fill-opacity=".4" stroke="#12826e" stroke-width="2"/><rect x="343.0" y="625.0" width="9.8" height="1.5" fill="#12826e" fill-opacity=".4" stroke="#12826e" stroke-width="2"/><rect x="362.9" y="625.0" width="9.8" height="1.5" fill="#12826e" fill-opacity=".4" stroke="#12826e" stroke-width="2"/><rect x="382.7" y="625.0" width="9.8" height="1.5" fill="#12826e" fill-opacity=".4" stroke="#12826e" stroke-width="2"/><rect x="402.6" y="625.0" width="9.8" height="1.5" fill="#12826e" fill-opacity=".4" stroke="#12826e" stroke-width="2"/><rect x="422.5" y="625.0" width="9.8" height="1.5" fill="#12826e" fill-opacity=".4" stroke="#12826e" stroke-width="2"/><rect x="442.3" y="603.3" width="9.8" height="23.2" fill="#12826e" fill-opacity=".4" stroke="#12826e" stroke-width="2"/><rect x="462.2" y="625.0" width="9.8" height="1.5" fill="#12826e" fill-opacity=".4" stroke="#12826e" stroke-width="2"/><rect x="482.0" y="533.7" width="9.8" height="92.8" fill="#12826e" fill-opacity=".4" stroke="#12826e" stroke-width="2"/><rect x="501.9" y="487.4" width="9.8" height="139.1" fill="#12826e" fill-opacity=".4" stroke="#12826e" stroke-width="2"/><rect x="521.8" y="625.0" width="9.8" height="1.5" fill="#12826e" fill-opacity=".4" stroke="#12826e" stroke-width="2"/><rect x="298" y="463" width="234" height="163.5" fill="none" stroke="#444" stroke-width="2"/></svg>
<div class="t" style="left:254.00px;width:40px;text-align:right;top:621.19px;font-size:11px;color:#545454;font-weight:400;">0</div>
<div class="t" style="left:254.00px;width:40px;text-align:right;top:574.81px;font-size:11px;color:#545454;font-weight:400;">2</div>
<div class="t" style="left:254.00px;width:40px;text-align:right;top:528.42px;font-size:11px;color:#545454;font-weight:400;">4</div>
<div class="t" style="left:254.00px;width:40px;text-align:right;top:482.04px;font-size:11px;color:#545454;font-weight:400;">6</div>
<div class="t" style="left:288.50px;width:30px;text-align:center;top:632.69px;font-size:11px;color:#545454;font-weight:400;">Jan</div>
<div class="t" style="left:308.36px;width:30px;text-align:center;top:632.69px;font-size:11px;color:#545454;font-weight:400;">Fév</div>
<div class="t" style="left:328.22px;width:30px;text-align:center;top:632.69px;font-size:11px;color:#545454;font-weight:400;">Mar</div>
<div class="t" style="left:348.08px;width:30px;text-align:center;top:632.69px;font-size:11px;color:#545454;font-weight:400;">Avr</div>
<div class="t" style="left:367.94px;width:30px;text-align:center;top:632.69px;font-size:11px;color:#545454;font-weight:400;">Mai</div>
<div class="t" style="left:387.80px;width:30px;text-align:center;top:632.69px;font-size:11px;color:#545454;font-weight:400;">Jui</div>
<div class="t" style="left:407.66px;width:30px;text-align:center;top:632.69px;font-size:11px;color:#545454;font-weight:400;">Jui</div>
<div class="t" style="left:427.52px;width:30px;text-align:center;top:632.69px;font-size:11px;color:#545454;font-weight:400;">Aoû</div>
<div class="t" style="left:447.38px;width:30px;text-align:center;top:632.69px;font-size:11px;color:#545454;font-weight:400;">Sep</div>
<div class="t" style="left:467.24px;width:30px;text-align:center;top:632.69px;font-size:11px;color:#545454;font-weight:400;">Oct</div>
<div class="t" style="left:487.10px;width:30px;text-align:center;top:632.69px;font-size:11px;color:#545454;font-weight:400;">Nov</div>
<div class="t" style="left:506.96px;width:30px;text-align:center;top:632.69px;font-size:11px;color:#545454;font-weight:400;">Déc</div>
<div class="t" style="left:617.00px;width:300px;text-align:center;top:441.70px;font-size:13px;color:#333;font-weight:400;">Montant de factures par mois (HT)</div>
<svg class="s" style="left:0;top:0" width="1680" height="887"><line x1="670" y1="627.5" x2="886" y2="627.5" stroke="#d8d8d8" stroke-width="1"/><line x1="670" y1="600.5" x2="886" y2="600.5" stroke="#d8d8d8" stroke-width="1"/><line x1="670" y1="572.5" x2="886" y2="572.5" stroke="#d8d8d8" stroke-width="1"/><line x1="670" y1="545.5" x2="886" y2="545.5" stroke="#d8d8d8" stroke-width="1"/><line x1="670" y1="518.5" x2="886" y2="518.5" stroke="#d8d8d8" stroke-width="1"/><line x1="670" y1="490.5" x2="886" y2="490.5" stroke="#d8d8d8" stroke-width="1"/><line x1="670" y1="463.5" x2="886" y2="463.5" stroke="#d8d8d8" stroke-width="1"/><line x1="675.5" y1="463" x2="675.5" y2="626.8" stroke="#d8d8d8" stroke-width="1"/><line x1="693.5" y1="463" x2="693.5" y2="626.8" stroke="#d8d8d8" stroke-width="1"/><line x1="711.5" y1="463" x2="711.5" y2="626.8" stroke="#d8d8d8" stroke-width="1"/><line x1="729.5" y1="463" x2="729.5" y2="626.8" stroke="#d8d8d8" stroke-width="1"/><line x1="747.5" y1="463" x2="747.5" y2="626.8" stroke="#d8d8d8" stroke-width="1"/><line x1="765.5" y1="463" x2="765.5" y2="626.8" stroke="#d8d8d8" stroke-width="1"/><line x1="783.5" y1="463" x2="783.5" y2="626.8" stroke="#d8d8d8" stroke-width="1"/><line x1="802.5" y1="463" x2="802.5" y2="626.8" stroke="#d8d8d8" stroke-width="1"/><line x1="820.5" y1="463" x2="820.5" y2="626.8" stroke="#d8d8d8" stroke-width="1"/><line x1="838.5" y1="463" x2="838.5" y2="626.8" stroke="#d8d8d8" stroke-width="1"/><line x1="856.5" y1="463" x2="856.5" y2="626.8" stroke="#d8d8d8" stroke-width="1"/><line x1="874.5" y1="463" x2="874.5" y2="626.8" stroke="#d8d8d8" stroke-width="1"/><rect x="829.5" y="473.5" width="17" height="13" fill="#fff" fill-opacity=".85" stroke="#ccc" stroke-width="1"/><rect x="831.0" y="475" width="14" height="10" fill="#8a6a8e"/><rect x="829.5" y="493.5" width="17" height="13" fill="#fff" fill-opacity=".85" stroke="#ccc" stroke-width="1"/><rect x="831.0" y="495" width="14" height="10" fill="#12826e"/><text x="851.0" y="483.5" font-family="Liberation Sans" font-size="11" fill="#545454">2016</text><text x="851.0" y="503.2" font-family="Liberation Sans" font-size="11" fill="#545454">2017</text><rect x="671.0" y="625.3" width="9.1" height="1.5" fill="#8a6a8e" fill-opacity=".4" stroke="#8a6a8e" stroke-width="2"/><rect x="689.0" y="625.3" width="9.2" height="1.5" fill="#8a6a8e" fill-opacity=".4" stroke="#8a6a8e" stroke-width="2"/><rect x="707.1" y="625.3" width="9.2" height="1.5" fill="#8a6a8e" fill-opacity=".4" stroke="#8a6a8e" stroke-width="2"/><rect x="725.1" y="625.3" width="9.2" height="1.5" fill="#8a6a8e" fill-opacity=".4" stroke="#8a6a8e" stroke-width="2"/><rect x="743.2" y="625.3" width="9.2" height="1.5" fill="#8a6a8e" fill-opacity=".4" stroke="#8a6a8e" stroke-width="2"/><rect x="761.3" y="625.3" width="9.2" height="1.5" fill="#8a6a8e" fill-opacity=".4" stroke="#8a6a8e" stroke-width="2"/><rect x="779.4" y="621.6" width="9.2" height="5.2" fill="#8a6a8e" fill-opacity=".4" stroke="#8a6a8e" stroke-width="2"/><rect x="797.5" y="625.3" width="9.2" height="1.5" fill="#8a6a8e" fill-opacity=".4" stroke="#8a6a8e" stroke-width="2"/><rect x="815.5" y="625.3" width="9.2" height="1.5" fill="#8a6a8e" fill-opacity=".4" stroke="#8a6a8e" stroke-width="2"/><rect x="833.6" y="625.3" width="9.2" height="1.5" fill="#8a6a8e" fill-opacity=".4" stroke="#8a6a8e" stroke-width="2"/><rect x="851.7" y="625.3" width="9.2" height="1.5" fill="#8a6a8e" fill-opacity=".4" stroke="#8a6a8e" stroke-width="2"/><rect x="869.8" y="625.3" width="9.2" height="1.5" fill="#8a6a8e" fill-opacity=".4" stroke="#8a6a8e" stroke-width="2"/><rect x="676.3" y="625.3" width="9.8" height="1.5" fill="#12826e" fill-opacity=".4" stroke="#12826e" stroke-width="2"/><rect x="694.4" y="625.3" width="9.8" height="1.5" fill="#12826e" fill-opacity=".4" stroke="#12826e" stroke-width="2"/><rect x="712.5" y="625.3" width="9.8" height="1.5" fill="#12826e" fill-opacity=".4" stroke="#12826e" stroke-width="2"/><rect x="730.5" y="625.3" width="9.8" height="1.5" fill="#12826e" fill-opacity=".4" stroke="#12826e" stroke-width="2"/><rect x="748.6" y="625.3" width="9.8" height="1.5" fill="#12826e" fill-opacity=".4" stroke="#12826e" stroke-width="2"/><rect x="766.7" y="625.3" width="9.8" height="1.5" fill="#12826e" fill-opacity=".4" stroke="#12826e" stroke-width="2"/><rect x="784.8" y="625.3" width="9.8" height="1.5" fill="#12826e" fill-opacity=".4" stroke="#12826e" stroke-width="2"/><rect x="802.9" y="625.3" width="9.8" height="1.5" fill="#12826e" fill-opacity=".4" stroke="#12826e" stroke-width="2"/><rect x="820.9" y="625.3" width="9.8" height="1.5" fill="#12826e" fill-opacity=".4" stroke="#12826e" stroke-width="2"/><rect x="839.0" y="624.3" width="9.8" height="2.5" fill="#12826e" fill-opacity=".4" stroke="#12826e" stroke-width="2"/><rect x="857.1" y="479.4" width="9.8" height="147.4" fill="#12826e" fill-opacity=".4" stroke="#12826e" stroke-width="2"/><rect x="875.2" y="625.3" width="9.8" height="1.5" fill="#12826e" fill-opacity=".4" stroke="#12826e" stroke-width="2"/><rect x="670" y="463" width="216" height="163.79999999999995" fill="none" stroke="#444" stroke-width="2"/></svg>
<div class="t" style="left:626.00px;width:40px;text-align:right;top:622.49px;font-size:11px;color:#545454;font-weight:400;">0</div>
<div class="t" style="left:626.00px;width:40px;text-align:right;top:595.19px;font-size:11px;color:#545454;font-weight:400;">500</div>
<div class="t" style="left:626.00px;width:40px;text-align:right;top:567.89px;font-size:11px;color:#545454;font-weight:400;">1000</div>
<div class="t" style="left:626.00px;width:40px;text-align:right;top:540.59px;font-size:11px;color:#545454;font-weight:400;">1500</div>
<div class="t" style="left:626.00px;width:40px;text-align:right;top:513.29px;font-size:11px;color:#545454;font-weight:400;">2000</div>
<div class="t" style="left:626.00px;width:40px;text-align:right;top:485.99px;font-size:11px;color:#545454;font-weight:400;">2500</div>
<div class="t" style="left:626.00px;width:40px;text-align:right;top:458.69px;font-size:11px;color:#545454;font-weight:400;">3000</div>
<div class="t" style="left:660.50px;width:30px;text-align:center;top:632.69px;font-size:11px;color:#545454;font-weight:400;">Jan</div>
<div class="t" style="left:678.58px;width:30px;text-align:center;top:632.69px;font-size:11px;color:#545454;font-weight:400;">Fév</div>
<div class="t" style="left:696.66px;width:30px;text-align:center;top:632.69px;font-size:11px;color:#545454;font-weight:400;">Mar</div>
<div class="t" style="left:714.74px;width:30px;text-align:center;top:632.69px;font-size:11px;color:#545454;font-weight:400;">Avr</div>
<div class="t" style="left:732.82px;width:30px;text-align:center;top:632.69px;font-size:11px;color:#545454;font-weight:400;">Mai</div>
<div class="t" style="left:750.90px;width:30px;text-align:center;top:632.69px;font-size:11px;color:#545454;font-weight:400;">Jui</div>
<div class="t" style="left:768.98px;width:30px;text-align:center;top:632.69px;font-size:11px;color:#545454;font-weight:400;">Jui</div>
<div class="t" style="left:787.06px;width:30px;text-align:center;top:632.69px;font-size:11px;color:#545454;font-weight:400;">Aoû</div>
<div class="t" style="left:805.14px;width:30px;text-align:center;top:632.69px;font-size:11px;color:#545454;font-weight:400;">Sep</div>
<div class="t" style="left:823.22px;width:30px;text-align:center;top:632.69px;font-size:11px;color:#545454;font-weight:400;">Oct</div>
<div class="t" style="left:841.30px;width:30px;text-align:center;top:632.69px;font-size:11px;color:#545454;font-weight:400;">Nov</div>
<div class="t" style="left:859.38px;width:30px;text-align:center;top:632.69px;font-size:11px;color:#545454;font-weight:400;">Déc</div>
<div class="b" style="left:233px;top:676px;width:713px;height:2px;background:#6b6b6b;"></div>
<div class="b" style="left:233px;top:678px;width:713px;height:39px;background:#e4e4e6;"></div>
<div class="b" style="left:233px;top:678px;width:713px;height:1px;background:#ebebed;"></div>
<div class="t" style="left:236px;top:690.00px;font-size:13px;color:#1a1a1a;font-weight:400;">Les 5 derniers contacts/adresses modifiés</div>
<svg class="s" style="left:914px;top:691px" width="9" height="9" viewBox="0 0 9 9"><rect x="0.0" y="0.0" width="1.7" height="1.7" fill="#5a5a5a"/><rect x="0.0" y="3.2" width="1.7" height="1.7" fill="#5a5a5a"/><rect x="0.0" y="6.4" width="1.7" height="1.7" fill="#5a5a5a"/><rect x="3.2" y="0.0" width="1.7" height="1.7" fill="#5a5a5a"/><rect x="3.2" y="3.2" width="1.7" height="1.7" fill="#5a5a5a"/><rect x="3.2" y="6.4" width="1.7" height="1.7" fill="#5a5a5a"/><rect x="6.4" y="0.0" width="1.7" height="1.7" fill="#5a5a5a"/><rect x="6.4" y="3.2" width="1.7" height="1.7" fill="#5a5a5a"/><rect x="6.4" y="6.4" width="1.7" height="1.7" fill="#5a5a5a"/></svg>
<svg class="s" style="left:933px;top:691px" width="9" height="9" viewBox="0 0 9 9"><path d="M0.5 0.5 L8 8 M8 0.5 L0.5 8" stroke="#5a5a5a" stroke-width=".9"/></svg>
<div class="b" style="left:233px;top:746px;width:713px;height:1px;background:#dcdcdc;"></div>
<svg class="s" style="left:236px;top:724px" width="15" height="15" viewBox="0 0 15 15"><defs><linearGradient id="gc" x1="0" y1="0" x2="1" y2="0"><stop offset="0" stop-color="#7a86a8"/><stop offset=".5" stop-color="#d8e0f0"/><stop offset="1" stop-color="#6a7698"/></linearGradient></defs><path d="M8 2 Q11 0 14 2 L14 14 L8 14 Z" fill="url(#gc)"/><g fill="#5a6688"><rect x="8.5" y="4" width="5" height=".9"/><rect x="8.5" y="6.2" width="5" height=".9"/><rect x="8.5" y="8.4" width="5" height=".9"/><rect x="8.5" y="10.6" width="5" height=".9"/></g><ellipse cx="5.6" cy="5.8" rx="2.8" ry="3.3" fill="#5a5a5a"/><path d="M0 14.8 L0.5 11.5 Q1 9.5 3.5 9.3 L8 9.3 Q10.5 9.5 10.8 11.5 L11 14.8 Z" fill="#4a4a4a"/></svg>
<div class="t" style="left:254px;top:724.50px;font-size:13px;color:#252e5e;font-weight:400;">Juanjo</div>
<svg class="s" style="left:405px;top:724px" width="14" height="15" viewBox="0 0 14 15"><defs><linearGradient id="gco" x1="0" y1="0" x2="1" y2="1"><stop offset="0" stop-color="#a8aecb"/><stop offset="1" stop-color="#6c7396"/></linearGradient></defs><path d="M8.3 1.6 Q9 0.6 11 0.6 L13.2 1.6 L13.9 13.5 L8.3 13.5 Z" fill="#6a7296"/><rect x="8.8" y="3.0" width="4.4" height="1.1" fill="#d4dcf8"/><rect x="8.8" y="5.4" width="4.4" height="1.1" fill="#d4dcf8"/><rect x="8.8" y="7.8" width="4.4" height="1.1" fill="#d4dcf8"/><rect x="8.8" y="10.2" width="4.4" height="1.1" fill="#d4dcf8"/><rect x="8.8" y="12.6" width="4.4" height="1.1" fill="#d4dcf8"/><path d="M0.3 4 Q0.5 2.8 2 2.6 L8.6 2.6 L8.6 14.7 L0.5 14.7 Z" fill="url(#gco)"/><rect x="1.2" y="5.2" width="1.4" height="1.4" fill="#f4f6ff"/><rect x="1.2" y="8.1" width="1.4" height="1.4" fill="#f4f6ff"/><rect x="1.2" y="11.0" width="1.4" height="1.4" fill="#f4f6ff"/><rect x="3.6" y="5.2" width="1.4" height="1.4" fill="#f4f6ff"/><rect x="3.6" y="8.1" width="1.4" height="1.4" fill="#f4f6ff"/><rect x="3.6" y="11.0" width="1.4" height="1.4" fill="#f4f6ff"/><rect x="6.0" y="5.2" width="1.4" height="1.4" fill="#f4f6ff"/><rect x="6.0" y="8.1" width="1.4" height="1.4" fill="#f4f6ff"/><rect x="6.0" y="11.0" width="1.4" height="1.4" fill="#f4f6ff"/></svg>
<div class="t" style="left:423px;top:724.50px;font-size:13px;color:#252e5e;font-weight:400;">2Byte</div>
<div class="t" style="left:821.00px;width:100px;text-align:right;top:724.50px;font-size:13px;color:#222;font-weight:400;">03/11/2017</div>
<div class="b" style="left:929px;top:724px;width:15px;height:15px;border-radius:50%;background:#1c8a3c;"></div>
<div class="b" style="left:233px;top:747px;width:713px;height:29px;background:#f7f7f7;"></div>
<div class="b" style="left:233px;top:776px;width:713px;height:1px;background:#dcdcdc;"></div>
<svg class="s" style="left:236px;top:754px" width="15" height="15" viewBox="0 0 15 15"><defs><linearGradient id="gc" x1="0" y1="0" x2="1" y2="0"><stop offset="0" stop-color="#7a86a8"/><stop offset=".5" stop-color="#d8e0f0"/><stop offset="1" stop-color="#6a7698"/></linearGradient></defs><path d="M8 2 Q11 0 14 2 L14 14 L8 14 Z" fill="url(#gc)"/><g fill="#5a6688"><rect x="8.5" y="4" width="5" height=".9"/><rect x="8.5" y="6.2" width="5" height=".9"/><rect x="8.5" y="8.4" width="5" height=".9"/><rect x="8.5" y="10.6" width="5" height=".9"/></g><ellipse cx="5.6" cy="5.8" rx="2.8" ry="3.3" fill="#5a5a5a"/><path d="M0 14.8 L0.5 11.5 Q1 9.5 3.5 9.3 L8 9.3 Q10.5 9.5 10.8 11.5 L11 14.8 Z" fill="#4a4a4a"/></svg>
<div class="t" style="left:254px;top:754.50px;font-size:13px;color:#252e5e;font-weight:400;">Einstein</div>
<svg class="s" style="left:405px;top:754px" width="14" height="15" viewBox="0 0 14 15"><defs><linearGradient id="gco" x1="0" y1="0" x2="1" y2="1"><stop offset="0" stop-color="#a8aecb"/><stop offset="1" stop-color="#6c7396"/></linearGradient></defs><path d="M8.3 1.6 Q9 0.6 11 0.6 L13.2 1.6 L13.9 13.5 L8.3 13.5 Z" fill="#6a7296"/><rect x="8.8" y="3.0" width="4.4" height="1.1" fill="#d4dcf8"/><rect x="8.8" y="5.4" width="4.4" height="1.1" fill="#d4dcf8"/><rect x="8.8" y="7.8" width="4.4" height="1.1" fill="#d4dcf8"/><rect x="8.8" y="10.2" width="4.4" height="1.1" fill="#d4dcf8"/><rect x="8.8" y="12.6" width="4.4" height="1.1" fill="#d4dcf8"/><path d="M0.3 4 Q0.5 2.8 2 2.6 L8.6 2.6 L8.6 14.7 L0.5 14.7 Z" fill="url(#gco)"/><rect x="1.2" y="5.2" width="1.4" height="1.4" fill="#f4f6ff"/><rect x="1.2" y="8.1" width="1.4" height="1.4" fill="#f4f6ff"/><rect x="1.2" y="11.0" width="1.4" height="1.4" fill="#f4f6ff"/><rect x="3.6" y="5.2" width="1.4" height="1.4" fill="#f4f6ff"/><rect x="3.6" y="8.1" width="1.4" height="1.4" fill="#f4f6ff"/><rect x="3.6" y="11.0" width="1.4" height="1.4" fill="#f4f6ff"/><rect x="6.0" y="5.2" width="1.4" height="1.4" fill="#f4f6ff"/><rect x="6.0" y="8.1" width="1.4" height="1.4" fill="#f4f6ff"/><rect x="6.0" y="11.0" width="1.4" height="1.4" fill="#f4f6ff"/></svg>
<div class="t" style="left:423px;top:754.50px;font-size:13px;color:#252e5e;font-weight:400;">Company Corp 1 (alias)</div>
<div class="t" style="left:821.00px;width:100px;text-align:right;top:754.50px;font-size:13px;color:#222;font-weight:400;">12/05/2017</div>
<div class="b" style="left:929px;top:754px;width:15px;height:15px;border-radius:50%;background:#1c8a3c;"></div>
<div class="b" style="left:233px;top:806px;width:713px;height:1px;background:#dcdcdc;"></div>
<svg class="s" style="left:236px;top:784px" width="15" height="15" viewBox="0 0 15 15"><defs><linearGradient id="gc" x1="0" y1="0" x2="1" y2="0"><stop offset="0" stop-color="#7a86a8"/><stop offset=".5" stop-color="#d8e0f0"/><stop offset="1" stop-color="#6a7698"/></linearGradient></defs><path d="M8 2 Q11 0 14 2 L14 14 L8 14 Z" fill="url(#gc)"/><g fill="#5a6688"><rect x="8.5" y="4" width="5" height=".9"/><rect x="8.5" y="6.2" width="5" height=".9"/><rect x="8.5" y="8.4" width="5" height=".9"/><rect x="8.5" y="10.6" width="5" height=".9"/></g><ellipse cx="5.6" cy="5.8" rx="2.8" ry="3.3" fill="#5a5a5a"/><path d="M0 14.8 L0.5 11.5 Q1 9.5 3.5 9.3 L8 9.3 Q10.5 9.5 10.8 11.5 L11 14.8 Z" fill="#4a4a4a"/></svg>
<div class="t" style="left:254px;top:784.50px;font-size:13px;color:#252e5e;font-weight:400;">Laurent Smith</div>
<svg class="s" style="left:405px;top:784px" width="14" height="15" viewBox="0 0 14 15"><defs><linearGradient id="gco" x1="0" y1="0" x2="1" y2="1"><stop offset="0" stop-color="#a8aecb"/><stop offset="1" stop-color="#6c7396"/></linearGradient></defs><path d="M8.3 1.6 Q9 0.6 11 0.6 L13.2 1.6 L13.9 13.5 L8.3 13.5 Z" fill="#6a7296"/><rect x="8.8" y="3.0" width="4.4" height="1.1" fill="#d4dcf8"/><rect x="8.8" y="5.4" width="4.4" height="1.1" fill="#d4dcf8"/><rect x="8.8" y="7.8" width="4.4" height="1.1" fill="#d4dcf8"/><rect x="8.8" y="10.2" width="4.4" height="1.1" fill="#d4dcf8"/><rect x="8.8" y="12.6" width="4.4" height="1.1" fill="#d4dcf8"/><path d="M0.3 4 Q0.5 2.8 2 2.6 L8.6 2.6 L8.6 14.7 L0.5 14.7 Z" fill="url(#gco)"/><rect x="1.2" y="5.2" width="1.4" height="1.4" fill="#f4f6ff"/><rect x="1.2" y="8.1" width="1.4" height="1.4" fill="#f4f6ff"/><rect x="1.2" y="11.0" width="1.4" height="1.4" fill="#f4f6ff"/><rect x="3.6" y="5.2" width="1.4" height="1.4" fill="#f4f6ff"/><rect x="3.6" y="8.1" width="1.4" height="1.4" fill="#f4f6ff"/><rect x="3.6" y="11.0" width="1.4" height="1.4" fill="#f4f6ff"/><rect x="6.0" y="5.2" width="1.4" height="1.4" fill="#f4f6ff"/><rect x="6.0" y="8.1" width="1.4" height="1.4" fill="#f4f6ff"/><rect x="6.0" y="11.0" width="1.4" height="1.4" fill="#f4f6ff"/></svg>
<div class="t" style="left:423px;top:784.50px;font-size:13px;color:#252e5e;font-weight:400;">Company Corp 1 (alias)</div>
<div class="t" style="left:821.00px;width:100px;text-align:right;top:784.50px;font-size:13px;color:#222;font-weight:400;">12/05/2017</div>
<div class="b" style="left:929px;top:784px;width:15px;height:15px;border-radius:50%;background:#1c8a3c;"></div>
<div class="b" style="left:233px;top:807px;width:713px;height:29px;background:#f7f7f7;"></div>
<div class="b" style="left:233px;top:836px;width:713px;height:1px;background:#dcdcdc;"></div>
<svg class="s" style="left:236px;top:814px" width="15" height="15" viewBox="0 0 15 15"><defs><linearGradient id="gc" x1="0" y1="0" x2="1" y2="0"><stop offset="0" stop-color="#7a86a8"/><stop offset=".5" stop-color="#d8e0f0"/><stop offset="1" stop-color="#6a7698"/></linearGradient></defs><path d="M8 2 Q11 0 14 2 L14 14 L8 14 Z" fill="url(#gc)"/><g fill="#5a6688"><rect x="8.5" y="4" width="5" height=".9"/><rect x="8.5" y="6.2" width="5" height=".9"/><rect x="8.5" y="8.4" width="5" height=".9"/><rect x="8.5" y="10.6" width="5" height=".9"/></g><ellipse cx="5.6" cy="5.8" rx="2.8" ry="3.3" fill="#5a5a5a"/><path d="M0 14.8 L0.5 11.5 Q1 9.5 3.5 9.3 L8 9.3 Q10.5 9.5 10.8 11.5 L11 14.8 Z" fill="#4a4a4a"/></svg>
<div class="t" style="left:254px;top:814.50px;font-size:13px;color:#252e5e;font-weight:400;">Eldy</div>
<svg class="s" style="left:405px;top:814px" width="14" height="15" viewBox="0 0 14 15"><defs><linearGradient id="gco" x1="0" y1="0" x2="1" y2="1"><stop offset="0" stop-color="#a8aecb"/><stop offset="1" stop-color="#6c7396"/></linearGradient></defs><path d="M8.3 1.6 Q9 0.6 11 0.6 L13.2 1.6 L13.9 13.5 L8.3 13.5 Z" fill="#6a7296"/><rect x="8.8" y="3.0" width="4.4" height="1.1" fill="#d4dcf8"/><rect x="8.8" y="5.4" width="4.4" height="1.1" fill="#d4dcf8"/><rect x="8.8" y="7.8" width="4.4" height="1.1" fill="#d4dcf8"/><rect x="8.8" y="10.2" width="4.4" height="1.1" fill="#d4dcf8"/><rect x="8.8" y="12.6" width="4.4" height="1.1" fill="#d4dcf8"/><path d="M0.3 4 Q0.5 2.8 2 2.6 L8.6 2.6 L8.6 14.7 L0.5 14.7 Z" fill="url(#gco)"/><rect x="1.2" y="5.2" width="1.4" height="1.4" fill="#f4f6ff"/><rect x="1.2" y="8.1" width="1.4" height="1.4" fill="#f4f6ff"/><rect x="1.2" y="11.0" width="1.4" height="1.4" fill="#f4f6ff"/><rect x="3.6" y="5.2" width="1.4" height="1.4" fill="#f4f6ff"/><rect x="3.6" y="8.1" width="1.4" height="1.4" fill="#f4f6ff"/><rect x="3.6" y="11.0" width="1.4" height="1.4" fill="#f4f6ff"/><rect x="6.0" y="5.2" width="1.4" height="1.4" fill="#f4f6ff"/><rect x="6.0" y="8.1" width="1.4" height="1.4" fill="#f4f6ff"/><rect x="6.0" y="11.0" width="1.4" height="1.4" fill="#f4f6ff"/></svg>
<div class="t" style="left:423px;top:814.50px;font-size:13px;color:#252e5e;font-weight:400;">NLTechno (The OpenSource company)</div>
<div class="t" style="left:821.00px;width:100px;text-align:right;top:814.50px;font-size:13px;color:#222;font-weight:400;">30/07/2016</div>
<div class="b" style="left:929px;top:814px;width:15px;height:15px;border-radius:50%;background:#1c8a3c;"></div>
<div class="b" style="left:233px;top:866px;width:713px;height:1px;background:#dcdcdc;"></div>
<svg class="s" style="left:236px;top:844px" width="15" height="15" viewBox="0 0 15 15"><defs><linearGradient id="gc" x1="0" y1="0" x2="1" y2="0"><stop offset="0" stop-color="#7a86a8"/><stop offset=".5" stop-color="#d8e0f0"/><stop offset="1" stop-color="#6a7698"/></linearGradient></defs><path d="M8 2 Q11 0 14 2 L14 14 L8 14 Z" fill="url(#gc)"/><g fill="#5a6688"><rect x="8.5" y="4" width="5" height=".9"/><rect x="8.5" y="6.2" width="5" height=".9"/><rect x="8.5" y="8.4" width="5" height=".9"/><rect x="8.5" y="10.6" width="5" height=".9"/></g><ellipse cx="5.6" cy="5.8" rx="2.8" ry="3.3" fill="#5a5a5a"/><path d="M0 14.8 L0.5 11.5 Q1 9.5 3.5 9.3 L8 9.3 Q10.5 9.5 10.8 11.5 L11 14.8 Z" fill="#4a4a4a"/></svg>
<div class="t" style="left:254px;top:844.50px;font-size:13px;color:#252e5e;font-weight:400;">Dad</div>
<div class="t" style="left:821.00px;width:100px;text-align:right;top:844.50px;font-size:13px;color:#222;font-weight:400;">30/07/2016</div>
<div class="b" style="left:929px;top:844px;width:15px;height:15px;border-radius:50%;background:#1c8a3c;"></div>
<div class="b" style="left:963px;top:125px;width:697px;height:2px;background:#6b6b6b;"></div>
<div class="b" style="left:963px;top:127px;width:697px;height:39px;background:#e4e4e6;"></div>
<div class="b" style="left:963px;top:127px;width:697px;height:1px;background:#ebebed;"></div>
<div class="t" style="left:966px;top:139.00px;font-size:13px;color:#1a1a1a;font-weight:400;">Tableau de bord des éléments ouverts</div>
<div class="b" style="left:963px;top:246px;width:697px;height:1px;background:#dedede;"></div>
<svg class="s" style="left:1278px;top:176px" width="68" height="62" viewBox="0 0 68 62">
<defs><radialGradient id="cl" cx=".4" cy=".35" r=".75"><stop offset="0" stop-color="#c4c4c4"/><stop offset=".6" stop-color="#a4a4a4"/><stop offset="1" stop-color="#7c7c80"/></radialGradient></defs>
<path d="M37 28 L36 42 L38 50 L36 60 M36 42 L28 50 M38 50 L46 47" stroke="#e2e2f6" stroke-width="2.2" fill="none"/>
<g fill="url(#cl)"><ellipse cx="16" cy="19" rx="13" ry="10"/><ellipse cx="27" cy="14" rx="10" ry="8"/><ellipse cx="41" cy="15" rx="10" ry="8"/><ellipse cx="54" cy="13" rx="11" ry="11"/><ellipse cx="33" cy="26" rx="27" ry="8"/><ellipse cx="14" cy="27" rx="10" ry="6"/></g>
<g fill="#4c7cac" opacity=".9"><path d="M12 38 L13 40.3 A1.05 1.05 0 1 1 11 40.3 Z"/><path d="M15 43 L16 45.3 A1.05 1.05 0 1 1 14 45.3 Z"/><path d="M20 36 L21 38.3 A1.05 1.05 0 1 1 19 38.3 Z"/><path d="M25 41 L26 43.3 A1.05 1.05 0 1 1 24 43.3 Z"/><path d="M29 32 L30 34.3 A1.05 1.05 0 1 1 28 34.3 Z"/><path d="M33 37 L34 39.3 A1.05 1.05 0 1 1 32 39.3 Z"/><path d="M38 42 L39 44.3 A1.05 1.05 0 1 1 37 44.3 Z"/><path d="M42 33 L43 35.3 A1.05 1.05 0 1 1 41 35.3 Z"/><path d="M46 38 L47 40.3 A1.05 1.05 0 1 1 45 40.3 Z"/><path d="M50 34 L51 36.3 A1.05 1.05 0 1 1 49 36.3 Z"/><path d="M54 39 L55 41.3 A1.05 1.05 0 1 1 53 41.3 Z"/><path d="M57 32 L58 34.3 A1.05 1.05 0 1 1 56 34.3 Z"/><path d="M20 46 L21 48.3 A1.05 1.05 0 1 1 19 48.3 Z"/><path d="M27 48 L28 50.3 A1.05 1.05 0 1 1 26 50.3 Z"/><path d="M36 47 L37 49.3 A1.05 1.05 0 1 1 35 49.3 Z"/><path d="M47 45 L48 47.3 A1.05 1.05 0 1 1 46 47.3 Z"/><path d="M11 45 L12 47.3 A1.05 1.05 0 1 1 10 47.3 Z"/><path d="M23 31 L24 33.3 A1.05 1.05 0 1 1 22 33.3 Z"/><path d="M52 44 L53 46.3 A1.05 1.05 0 1 1 51 46.3 Z"/><path d="M44 48 L45 50.3 A1.05 1.05 0 1 1 43 50.3 Z"/></g>
</svg>
<div class="b" style="left:970px;top:258px;width:166px;height:56px;border:1px solid #cacaca;border-radius:2px;background:#fff;"></div>
<div class="t" style="left:953px;width:200px;text-align:center;top:264.50px;line-height:20px;font-size:13px;color:#444;"><svg style="vertical-align:baseline;margin-top:-40px;position:relative;top:0px;margin-right:4px" width="14" height="14" viewBox="0 0 14 14"><circle cx="7" cy="7" r="6.6" fill="#888"/><path d="M7 2.5 L7 7 L10.5 7" stroke="#fff" stroke-width="1.6" fill="none"/></svg>Événements à faire</div>
<div class="t" style="left:1023.00px;width:60px;text-align:center;top:289.63px;font-size:16.5px;color:#1c2664;font-weight:400;">5</div>
<div class="b" style="left:1100px;top:292px;width:32px;height:17px;border-radius:3px;background:#a7471b;"></div>
<svg class="s" style="left:1105px;top:293px" width="15" height="14" viewBox="0 0 15 14"><path d="M7.5 1.2 L14.2 13 L0.8 13 Z" fill="#fff" stroke="#fff" stroke-width=".8" stroke-linejoin="round"/><rect x="6.8" y="5" width="1.5" height="4.2" fill="#7a3010"/><rect x="6.8" y="10.2" width="1.5" height="1.5" fill="#7a3010"/></svg>
<div class="t" style="left:1121px;top:296.69px;font-size:11px;color:#fff;font-weight:400;letter-spacing:-0.4px;">4</div>
<div class="b" style="left:1144px;top:258px;width:166px;height:56px;border:1px solid #cacaca;border-radius:2px;background:#fff;"></div>
<div class="t" style="left:1127px;width:200px;text-align:center;top:264.50px;line-height:20px;font-size:13px;color:#444;"><svg style="vertical-align:baseline;margin-top:-40px;position:relative;top:0px;margin-right:4px" width="12" height="14" viewBox="0 0 12 14"><defs><linearGradient id="gp" x1="0" y1="0" x2="1" y2="0"><stop offset="0" stop-color="#c8f4ff"/><stop offset=".45" stop-color="#4aa8e8"/><stop offset="1" stop-color="#1048c8"/></linearGradient></defs><path d="M0.5 3 L6.5 3 L8.3 0.6 L10.5 2.2 L11.5 4 L11.5 13.2 L0.5 13.2 Z" fill="#dde4f4" stroke="#6a78a8" stroke-width=".6"/><path d="M0.5 5.5 Q6 3.8 11.5 4.6 L11.5 13.2 L0.5 13.2 Z" fill="url(#gp)"/><rect x="0.8" y="10.2" width="10.4" height="2.2" fill="#eef2ff"/><path d="M0.4 13.3 L11.6 13.3" stroke="#4a5a9a" stroke-width="1"/></svg>Projets ouverts</div>
<div class="t" style="left:1197.00px;width:60px;text-align:center;top:289.63px;font-size:16.5px;color:#1c2664;font-weight:400;">7</div>
<div class="b" style="left:1274px;top:292px;width:32px;height:17px;border-radius:3px;background:#a7471b;"></div>
<svg class="s" style="left:1279px;top:293px" width="15" height="14" viewBox="0 0 15 14"><path d="M7.5 1.2 L14.2 13 L0.8 13 Z" fill="#fff" stroke="#fff" stroke-width=".8" stroke-linejoin="round"/><rect x="6.8" y="5" width="1.5" height="4.2" fill="#7a3010"/><rect x="6.8" y="10.2" width="1.5" height="1.5" fill="#7a3010"/></svg>
<div class="t" style="left:1295px;top:296.69px;font-size:11px;color:#fff;font-weight:400;letter-spacing:-0.4px;">1</div>
<div class="b" style="left:1318px;top:258px;width:166px;height:56px;border:1px solid #cacaca;border-radius:2px;background:#fff;"></div>
<div class="t" style="left:1301px;width:200px;text-align:center;top:264.50px;line-height:20px;font-size:13px;color:#444;"><svg style="vertical-align:baseline;margin-top:-40px;position:relative;top:0px;margin-right:4px" width="12" height="14" viewBox="0 0 12 14"><g transform="rotate(-30 6 7)"><path d="M3.5 0.8 L8.5 0.8 L7.6 4.5 L10.2 7.8 L1.8 7.8 L4.4 4.5 Z" fill="#2a2a2a"/><path d="M6 7.8 L6 13.5" stroke="#444" stroke-width="1"/></g></svg>Tâches ouvertes</div>
<div class="t" style="left:1371.00px;width:60px;text-align:center;top:289.63px;font-size:16.5px;color:#1c2664;font-weight:400;">9</div>
<div class="b" style="left:1448px;top:292px;width:32px;height:17px;border-radius:3px;background:#a7471b;"></div>
<svg class="s" style="left:1453px;top:293px" width="15" height="14" viewBox="0 0 15 14"><path d="M7.5 1.2 L14.2 13 L0.8 13 Z" fill="#fff" stroke="#fff" stroke-width=".8" stroke-linejoin="round"/><rect x="6.8" y="5" width="1.5" height="4.2" fill="#7a3010"/><rect x="6.8" y="10.2" width="1.5" height="1.5" fill="#7a3010"/></svg>
<div class="t" style="left:1469px;top:296.69px;font-size:11px;color:#fff;font-weight:400;letter-spacing:-0.4px;">3</div>
<div class="b" style="left:1492px;top:258px;width:166px;height:56px;border:1px solid #cacaca;border-radius:2px;background:#fff;"></div>
<div class="t" style="left:1475px;width:200px;text-align:center;top:264.50px;line-height:20px;font-size:13px;color:#444;"><svg style="vertical-align:baseline;margin-top:-40px;position:relative;top:0px;margin-right:4px" width="11" height="14" viewBox="0 0 11 14"><defs><linearGradient id="gd" x1="0" y1="0" x2="1" y2="1"><stop offset="0" stop-color="#ffffff"/><stop offset=".5" stop-color="#f6f2f0"/><stop offset="1" stop-color="#dccbc4"/></linearGradient></defs><path d="M0.5 0.5 L6.8 0.5 L9.8 3.5 L9.8 13.2 L0.5 13.2 Z" fill="url(#gd)" stroke="#cdcdcd" stroke-width="1"/><path d="M9.8 3.2 L9.8 13.3 L0.3 13.3" stroke="#4e4040" stroke-width="1.1" fill="none"/><path d="M6.8 1 L6.8 3.3 L9.3 3.3" stroke="#666" stroke-width="1.2" fill="none"/><text x="5.2" y="11.2" font-size="6" font-family="Liberation Sans" fill="#6a5a55" text-anchor="middle">P</text></svg>Propositions comme…</div>
<div class="t" style="left:1545.00px;width:60px;text-align:center;top:289.63px;font-size:16.5px;color:#1c2664;font-weight:400;">18</div>
<div class="b" style="left:1617px;top:292px;width:37px;height:17px;border-radius:3px;background:#a7471b;"></div>
<svg class="s" style="left:1622px;top:293px" width="15" height="14" viewBox="0 0 15 14"><path d="M7.5 1.2 L14.2 13 L0.8 13 Z" fill="#fff" stroke="#fff" stroke-width=".8" stroke-linejoin="round"/><rect x="6.8" y="5" width="1.5" height="4.2" fill="#7a3010"/><rect x="6.8" y="10.2" width="1.5" height="1.5" fill="#7a3010"/></svg>
<div class="t" style="left:1638px;top:296.69px;font-size:11px;color:#fff;font-weight:400;letter-spacing:-0.4px;">17</div>
<div class="b" style="left:970px;top:323px;width:166px;height:56px;border:1px solid #cacaca;border-radius:2px;background:#fff;"></div>
<div class="t" style="left:953px;width:200px;text-align:center;top:329.50px;line-height:20px;font-size:13px;color:#444;"><svg style="vertical-align:baseline;margin-top:-40px;position:relative;top:0px;margin-right:4px" width="11" height="14" viewBox="0 0 11 14"><defs><linearGradient id="gd" x1="0" y1="0" x2="1" y2="1"><stop offset="0" stop-color="#ffffff"/><stop offset=".5" stop-color="#f6f2f0"/><stop offset="1" stop-color="#dccbc4"/></linearGradient></defs><path d="M0.5 0.5 L6.8 0.5 L9.8 3.5 L9.8 13.2 L0.5 13.2 Z" fill="url(#gd)" stroke="#cdcdcd" stroke-width="1"/><path d="M9.8 3.2 L9.8 13.3 L0.3 13.3" stroke="#4e4040" stroke-width="1.1" fill="none"/><path d="M6.8 1 L6.8 3.3 L9.3 3.3" stroke="#666" stroke-width="1.2" fill="none"/><text x="5.2" y="11.2" font-size="6" font-family="Liberation Sans" fill="#6a5a55" text-anchor="middle">P</text></svg>Propositions comme…</div>
<div class="t" style="left:1023.00px;width:60px;text-align:center;top:354.63px;font-size:16.5px;color:#1c2664;font-weight:400;">8</div>
<div class="b" style="left:1144px;top:323px;width:166px;height:56px;border:1px solid #cacaca;border-radius:2px;background:#fff;"></div>
<div class="t" style="left:1127px;width:200px;text-align:center;top:329.50px;line-height:20px;font-size:13px;color:#444;"><svg style="vertical-align:baseline;margin-top:-40px;position:relative;top:0px;margin-right:4px" width="11" height="14" viewBox="0 0 11 14"><defs><linearGradient id="gd" x1="0" y1="0" x2="1" y2="1"><stop offset="0" stop-color="#ffffff"/><stop offset=".5" stop-color="#f6f2f0"/><stop offset="1" stop-color="#dccbc4"/></linearGradient></defs><path d="M0.5 0.5 L6.8 0.5 L9.8 3.5 L9.8 13.2 L0.5 13.2 Z" fill="url(#gd)" stroke="#cdcdcd" stroke-width="1"/><path d="M9.8 3.2 L9.8 13.3 L0.3 13.3" stroke="#4e4040" stroke-width="1.1" fill="none"/><path d="M6.8 1 L6.8 3.3 L9.3 3.3" stroke="#666" stroke-width="1.2" fill="none"/><text x="5.2" y="11.2" font-size="6" font-family="Liberation Sans" fill="#6a5a55" text-anchor="middle">P</text></svg>Propositions comme…</div>
<div class="t" style="left:1197.00px;width:60px;text-align:center;top:354.63px;font-size:16.5px;color:#1c8a3c;font-weight:400;">0</div>
<div class="b" style="left:1318px;top:323px;width:166px;height:56px;border:1px solid #cacaca;border-radius:2px;background:#fff;"></div>
<div class="t" style="left:1301px;width:200px;text-align:center;top:329.50px;line-height:20px;font-size:13px;color:#444;"><svg style="vertical-align:baseline;margin-top:-40px;position:relative;top:0px;margin-right:4px" width="11" height="14" viewBox="0 0 11 14"><defs><linearGradient id="gd" x1="0" y1="0" x2="1" y2="1"><stop offset="0" stop-color="#ffffff"/><stop offset=".5" stop-color="#f6f2f0"/><stop offset="1" stop-color="#dccbc4"/></linearGradient></defs><path d="M0.5 0.5 L6.8 0.5 L9.8 3.5 L9.8 13.2 L0.5 13.2 Z" fill="url(#gd)" stroke="#cdcdcd" stroke-width="1"/><path d="M9.8 3.2 L9.8 13.3 L0.3 13.3" stroke="#4e4040" stroke-width="1.1" fill="none"/><path d="M6.8 1 L6.8 3.3 L9.3 3.3" stroke="#666" stroke-width="1.2" fill="none"/><text x="5.2" y="11.2" font-size="6" font-family="Liberation Sans" fill="#6a5a55" text-anchor="middle">P</text></svg>Propositions comme…</div>
<div class="t" style="left:1371.00px;width:60px;text-align:center;top:354.63px;font-size:16.5px;color:#1c8a3c;font-weight:400;">0</div>
<div class="b" style="left:1492px;top:323px;width:166px;height:56px;border:1px solid #cacaca;border-radius:2px;background:#fff;"></div>
<div class="t" style="left:1475px;width:200px;text-align:center;top:329.50px;line-height:20px;font-size:13px;color:#444;"><svg style="vertical-align:baseline;margin-top:-40px;position:relative;top:0px;margin-right:4px" width="11" height="14" viewBox="0 0 11 14"><defs><linearGradient id="gd" x1="0" y1="0" x2="1" y2="1"><stop offset="0" stop-color="#ffffff"/><stop offset=".5" stop-color="#f6f2f0"/><stop offset="1" stop-color="#dccbc4"/></linearGradient></defs><path d="M0.5 0.5 L6.8 0.5 L9.8 3.5 L9.8 13.2 L0.5 13.2 Z" fill="url(#gd)" stroke="#cdcdcd" stroke-width="1"/><path d="M9.8 3.2 L9.8 13.3 L0.3 13.3" stroke="#4e4040" stroke-width="1.1" fill="none"/><path d="M6.8 1 L6.8 3.3 L9.3 3.3" stroke="#666" stroke-width="1.2" fill="none"/><text x="5.2" y="11.2" font-size="6" font-family="Liberation Sans" fill="#6a5a55" text-anchor="middle">O</text></svg>Commandes clients …</div>
<div class="t" style="left:1545.00px;width:60px;text-align:center;top:354.63px;font-size:16.5px;color:#1c2664;font-weight:400;">25</div>
<div class="b" style="left:1617px;top:357px;width:37px;height:17px;border-radius:3px;background:#a7471b;"></div>
<svg class="s" style="left:1622px;top:358px" width="15" height="14" viewBox="0 0 15 14"><path d="M7.5 1.2 L14.2 13 L0.8 13 Z" fill="#fff" stroke="#fff" stroke-width=".8" stroke-linejoin="round"/><rect x="6.8" y="5" width="1.5" height="4.2" fill="#7a3010"/><rect x="6.8" y="10.2" width="1.5" height="1.5" fill="#7a3010"/></svg>
<div class="t" style="left:1638px;top:361.69px;font-size:11px;color:#fff;font-weight:400;letter-spacing:-0.4px;">23</div>
<div class="b" style="left:970px;top:388px;width:166px;height:56px;border:1px solid #cacaca;border-radius:2px;background:#fff;"></div>
<div class="t" style="left:953px;width:200px;text-align:center;top:394.50px;line-height:20px;font-size:13px;color:#444;"><svg style="vertical-align:baseline;margin-top:-40px;position:relative;top:0px;margin-right:4px" width="11" height="14" viewBox="0 0 11 14"><defs><linearGradient id="gd" x1="0" y1="0" x2="1" y2="1"><stop offset="0" stop-color="#ffffff"/><stop offset=".5" stop-color="#f6f2f0"/><stop offset="1" stop-color="#dccbc4"/></linearGradient></defs><path d="M0.5 0.5 L6.8 0.5 L9.8 3.5 L9.8 13.2 L0.5 13.2 Z" fill="url(#gd)" stroke="#cdcdcd" stroke-width="1"/><path d="M9.8 3.2 L9.8 13.3 L0.3 13.3" stroke="#4e4040" stroke-width="1.1" fill="none"/><path d="M6.8 1 L6.8 3.3 L9.3 3.3" stroke="#666" stroke-width="1.2" fill="none"/><text x="5.2" y="11.2" font-size="6" font-family="Liberation Sans" fill="#6a5a55" text-anchor="middle">O</text></svg>Commandes fournis…</div>
<div class="t" style="left:1023.00px;width:60px;text-align:center;top:419.63px;font-size:16.5px;color:#1c2664;font-weight:400;">2</div>
<div class="b" style="left:1100px;top:422px;width:32px;height:17px;border-radius:3px;background:#a7471b;"></div>
<svg class="s" style="left:1105px;top:423px" width="15" height="14" viewBox="0 0 15 14"><path d="M7.5 1.2 L14.2 13 L0.8 13 Z" fill="#fff" stroke="#fff" stroke-width=".8" stroke-linejoin="round"/><rect x="6.8" y="5" width="1.5" height="4.2" fill="#7a3010"/><rect x="6.8" y="10.2" width="1.5" height="1.5" fill="#7a3010"/></svg>
<div class="t" style="left:1121px;top:426.69px;font-size:11px;color:#fff;font-weight:400;letter-spacing:-0.4px;">2</div>
<div class="b" style="left:1144px;top:388px;width:166px;height:56px;border:1px solid #cacaca;border-radius:2px;background:#fff;"></div>
<div class="t" style="left:1127px;width:200px;text-align:center;top:394.50px;line-height:20px;font-size:13px;color:#444;"><svg style="vertical-align:baseline;margin-top:-40px;position:relative;top:0px;margin-right:4px" width="11" height="14" viewBox="0 0 11 14"><defs><linearGradient id="gd" x1="0" y1="0" x2="1" y2="1"><stop offset="0" stop-color="#ffffff"/><stop offset=".5" stop-color="#f6f2f0"/><stop offset="1" stop-color="#dccbc4"/></linearGradient></defs><path d="M0.5 0.5 L6.8 0.5 L9.8 3.5 L9.8 13.2 L0.5 13.2 Z" fill="url(#gd)" stroke="#cdcdcd" stroke-width="1"/><path d="M9.8 3.2 L9.8 13.3 L0.3 13.3" stroke="#4e4040" stroke-width="1.1" fill="none"/><path d="M6.8 1 L6.8 3.3 L9.3 3.3" stroke="#666" stroke-width="1.2" fill="none"/><text x="5.2" y="11.2" font-size="6" font-family="Liberation Sans" fill="#6a5a55" text-anchor="middle">C</text></svg>Services à activer en…</div>
<div class="t" style="left:1197.00px;width:60px;text-align:center;top:419.63px;font-size:16.5px;color:#1c2664;font-weight:400;">2</div>
<div class="b" style="left:1274px;top:422px;width:32px;height:17px;border-radius:3px;background:#a7471b;"></div>
<svg class="s" style="left:1279px;top:423px" width="15" height="14" viewBox="0 0 15 14"><path d="M7.5 1.2 L14.2 13 L0.8 13 Z" fill="#fff" stroke="#fff" stroke-width=".8" stroke-linejoin="round"/><rect x="6.8" y="5" width="1.5" height="4.2" fill="#7a3010"/><rect x="6.8" y="10.2" width="1.5" height="1.5" fill="#7a3010"/></svg>
<div class="t" style="left:1295px;top:426.69px;font-size:11px;color:#fff;font-weight:400;letter-spacing:-0.4px;">2</div>
<div class="b" style="left:1318px;top:388px;width:166px;height:56px;border:1px solid #cacaca;border-radius:2px;background:#fff;"></div>
<div class="t" style="left:1301px;width:200px;text-align:center;top:394.50px;line-height:20px;font-size:13px;color:#444;"><svg style="vertical-align:baseline;margin-top:-40px;position:relative;top:0px;margin-right:4px" width="11" height="14" viewBox="0 0 11 14"><defs><linearGradient id="gd" x1="0" y1="0" x2="1" y2="1"><stop offset="0" stop-color="#ffffff"/><stop offset=".5" stop-color="#f6f2f0"/><stop offset="1" stop-color="#dccbc4"/></linearGradient></defs><path d="M0.5 0.5 L6.8 0.5 L9.8 3.5 L9.8 13.2 L0.5 13.2 Z" fill="url(#gd)" stroke="#cdcdcd" stroke-width="1"/><path d="M9.8 3.2 L9.8 13.3 L0.3 13.3" stroke="#4e4040" stroke-width="1.1" fill="none"/><path d="M6.8 1 L6.8 3.3 L9.3 3.3" stroke="#666" stroke-width="1.2" fill="none"/><text x="5.2" y="11.2" font-size="6" font-family="Liberation Sans" fill="#6a5a55" text-anchor="middle">C</text></svg>Services actifs et ex…</div>
<div class="t" style="left:1371.00px;width:60px;text-align:center;top:419.63px;font-size:16.5px;color:#1c2664;font-weight:400;">1</div>
<div class="b" style="left:1448px;top:422px;width:32px;height:17px;border-radius:3px;background:#a7471b;"></div>
<svg class="s" style="left:1453px;top:423px" width="15" height="14" viewBox="0 0 15 14"><path d="M7.5 1.2 L14.2 13 L0.8 13 Z" fill="#fff" stroke="#fff" stroke-width=".8" stroke-linejoin="round"/><rect x="6.8" y="5" width="1.5" height="4.2" fill="#7a3010"/><rect x="6.8" y="10.2" width="1.5" height="1.5" fill="#7a3010"/></svg>
<div class="t" style="left:1469px;top:426.69px;font-size:11px;color:#fff;font-weight:400;letter-spacing:-0.4px;">1</div>
<div class="b" style="left:1492px;top:388px;width:166px;height:56px;border:1px solid #cacaca;border-radius:2px;background:#fff;"></div>
<div class="t" style="left:1475px;width:200px;text-align:center;top:394.50px;line-height:20px;font-size:13px;color:#444;"><svg style="vertical-align:baseline;margin-top:-40px;position:relative;top:0px;margin-right:4px" width="11" height="14" viewBox="0 0 11 14"><defs><linearGradient id="gd" x1="0" y1="0" x2="1" y2="1"><stop offset="0" stop-color="#ffffff"/><stop offset=".5" stop-color="#f6f2f0"/><stop offset="1" stop-color="#dccbc4"/></linearGradient></defs><path d="M0.5 0.5 L6.8 0.5 L9.8 3.5 L9.8 13.2 L0.5 13.2 Z" fill="url(#gd)" stroke="#cdcdcd" stroke-width="1"/><path d="M9.8 3.2 L9.8 13.3 L0.3 13.3" stroke="#4e4040" stroke-width="1.1" fill="none"/><path d="M6.8 1 L6.8 3.3 L9.3 3.3" stroke="#666" stroke-width="1.2" fill="none"/><text x="5.2" y="11.2" font-size="6" font-family="Liberation Sans" fill="#6a5a55" text-anchor="middle">€</text></svg>Factures clients imp…</div>
<div class="t" style="left:1545.00px;width:60px;text-align:center;top:419.63px;font-size:16.5px;color:#1c2664;font-weight:400;">19</div>
<div class="b" style="left:1617px;top:422px;width:37px;height:17px;border-radius:3px;background:#a7471b;"></div>
<svg class="s" style="left:1622px;top:423px" width="15" height="14" viewBox="0 0 15 14"><path d="M7.5 1.2 L14.2 13 L0.8 13 Z" fill="#fff" stroke="#fff" stroke-width=".8" stroke-linejoin="round"/><rect x="6.8" y="5" width="1.5" height="4.2" fill="#7a3010"/><rect x="6.8" y="10.2" width="1.5" height="1.5" fill="#7a3010"/></svg>
<div class="t" style="left:1638px;top:426.69px;font-size:11px;color:#fff;font-weight:400;letter-spacing:-0.4px;">12</div>
<div class="b" style="left:970px;top:453px;width:166px;height:56px;border:1px solid #cacaca;border-radius:2px;background:#fff;"></div>
<div class="t" style="left:953px;width:200px;text-align:center;top:459.50px;line-height:20px;font-size:13px;color:#444;"><svg style="vertical-align:baseline;margin-top:-40px;position:relative;top:0px;margin-right:4px" width="11" height="14" viewBox="0 0 11 14"><defs><linearGradient id="gd" x1="0" y1="0" x2="1" y2="1"><stop offset="0" stop-color="#ffffff"/><stop offset=".5" stop-color="#f6f2f0"/><stop offset="1" stop-color="#dccbc4"/></linearGradient></defs><path d="M0.5 0.5 L6.8 0.5 L9.8 3.5 L9.8 13.2 L0.5 13.2 Z" fill="url(#gd)" stroke="#cdcdcd" stroke-width="1"/><path d="M9.8 3.2 L9.8 13.3 L0.3 13.3" stroke="#4e4040" stroke-width="1.1" fill="none"/><path d="M6.8 1 L6.8 3.3 L9.3 3.3" stroke="#666" stroke-width="1.2" fill="none"/><text x="5.2" y="11.2" font-size="6" font-family="Liberation Sans" fill="#6a5a55" text-anchor="middle">€</text></svg>Factures fournisseur…</div>
<div class="t" style="left:1023.00px;width:60px;text-align:center;top:484.63px;font-size:16.5px;color:#1c2664;font-weight:400;">2</div>
<div class="b" style="left:1100px;top:487px;width:32px;height:17px;border-radius:3px;background:#a7471b;"></div>
<svg class="s" style="left:1105px;top:488px" width="15" height="14" viewBox="0 0 15 14"><path d="M7.5 1.2 L14.2 13 L0.8 13 Z" fill="#fff" stroke="#fff" stroke-width=".8" stroke-linejoin="round"/><rect x="6.8" y="5" width="1.5" height="4.2" fill="#7a3010"/><rect x="6.8" y="10.2" width="1.5" height="1.5" fill="#7a3010"/></svg>
<div class="t" style="left:1121px;top:491.69px;font-size:11px;color:#fff;font-weight:400;letter-spacing:-0.4px;">2</div>
<div class="b" style="left:1144px;top:453px;width:166px;height:56px;border:1px solid #cacaca;border-radius:2px;background:#fff;"></div>
<div class="t" style="left:1127px;width:200px;text-align:center;top:459.50px;line-height:20px;font-size:13px;color:#444;"><svg style="vertical-align:baseline;margin-top:-40px;position:relative;top:0px;margin-right:4px" width="13" height="11" viewBox="0 0 13 11"><defs><linearGradient id="gb" x1="0" y1="0" x2="0" y2="1"><stop offset="0" stop-color="#d8d8dc"/><stop offset="1" stop-color="#8c8c94"/></linearGradient></defs><rect x="1" y="3.5" width="11.5" height="7" fill="url(#gb)"/><rect x="4" y="5.5" width="7" height="3" fill="#b4b8c8"/><circle cx="3" cy="3" r="2.4" fill="#d4c47a"/><rect x="1.5" y="1" width="3" height="1.5" fill="#c8b868"/></svg>Écritures à rapprocher</div>
<div class="t" style="left:1197.00px;width:60px;text-align:center;top:484.63px;font-size:16.5px;color:#1c2664;font-weight:400;">11</div>
<div class="b" style="left:1274px;top:487px;width:32px;height:17px;border-radius:3px;background:#a7471b;"></div>
<svg class="s" style="left:1279px;top:488px" width="15" height="14" viewBox="0 0 15 14"><path d="M7.5 1.2 L14.2 13 L0.8 13 Z" fill="#fff" stroke="#fff" stroke-width=".8" stroke-linejoin="round"/><rect x="6.8" y="5" width="1.5" height="4.2" fill="#7a3010"/><rect x="6.8" y="10.2" width="1.5" height="1.5" fill="#7a3010"/></svg>
<div class="t" style="left:1295px;top:491.69px;font-size:11px;color:#fff;font-weight:400;letter-spacing:-0.4px;">8</div>
<div class="b" style="left:1318px;top:453px;width:166px;height:56px;border:1px solid #cacaca;border-radius:2px;background:#fff;"></div>
<div class="t" style="left:1301px;width:200px;text-align:center;top:459.50px;line-height:20px;font-size:13px;color:#444;"><svg style="vertical-align:baseline;margin-top:-40px;position:relative;top:0px;margin-right:4px" width="13" height="11" viewBox="0 0 13 11"><defs><linearGradient id="gb" x1="0" y1="0" x2="0" y2="1"><stop offset="0" stop-color="#d8d8dc"/><stop offset="1" stop-color="#8c8c94"/></linearGradient></defs><rect x="1" y="3.5" width="11.5" height="7" fill="url(#gb)"/><rect x="4" y="5.5" width="7" height="3" fill="#b4b8c8"/><circle cx="3" cy="3" r="2.4" fill="#d4c47a"/><rect x="1.5" y="1" width="3" height="1.5" fill="#c8b868"/></svg>Chèques à déposer</div>
<div class="t" style="left:1371.00px;width:60px;text-align:center;top:484.63px;font-size:16.5px;color:#1c2664;font-weight:400;">2</div>
<div class="b" style="left:1448px;top:487px;width:32px;height:17px;border-radius:3px;background:#a7471b;"></div>
<svg class="s" style="left:1453px;top:488px" width="15" height="14" viewBox="0 0 15 14"><path d="M7.5 1.2 L14.2 13 L0.8 13 Z" fill="#fff" stroke="#fff" stroke-width=".8" stroke-linejoin="round"/><rect x="6.8" y="5" width="1.5" height="4.2" fill="#7a3010"/><rect x="6.8" y="10.2" width="1.5" height="1.5" fill="#7a3010"/></svg>
<div class="t" style="left:1469px;top:491.69px;font-size:11px;color:#fff;font-weight:400;letter-spacing:-0.4px;">2</div>
<div class="b" style="left:1492px;top:453px;width:166px;height:56px;border:1px solid #cacaca;border-radius:2px;background:#fff;"></div>
<div class="t" style="left:1475px;width:200px;text-align:center;top:459.50px;line-height:20px;font-size:13px;color:#444;"><svg style="vertical-align:baseline;margin-top:-40px;position:relative;top:0px;margin-right:4px" width="11" height="14" viewBox="0 0 11 14"><defs><linearGradient id="gd" x1="0" y1="0" x2="1" y2="1"><stop offset="0" stop-color="#ffffff"/><stop offset=".5" stop-color="#f6f2f0"/><stop offset="1" stop-color="#dccbc4"/></linearGradient></defs><path d="M0.5 0.5 L6.8 0.5 L9.8 3.5 L9.8 13.2 L0.5 13.2 Z" fill="url(#gd)" stroke="#cdcdcd" stroke-width="1"/><path d="M9.8 3.2 L9.8 13.3 L0.3 13.3" stroke="#4e4040" stroke-width="1.1" fill="none"/><path d="M6.8 1 L6.8 3.3 L9.3 3.3" stroke="#666" stroke-width="1.2" fill="none"/><text x="5.2" y="11.2" font-size="6" font-family="Liberation Sans" fill="#6a5a55" text-anchor="middle">i</text></svg>Notes de frais à appr…</div>
<div class="t" style="left:1545.00px;width:60px;text-align:center;top:484.63px;font-size:16.5px;color:#1c8a3c;font-weight:400;">0</div>
<div class="b" style="left:970px;top:518px;width:166px;height:56px;border:1px solid #cacaca;border-radius:2px;background:#fff;"></div>
<div class="t" style="left:953px;width:200px;text-align:center;top:524.50px;line-height:20px;font-size:13px;color:#444;"><svg style="vertical-align:baseline;margin-top:-40px;position:relative;top:0px;margin-right:4px" width="11" height="14" viewBox="0 0 11 14"><defs><linearGradient id="gd" x1="0" y1="0" x2="1" y2="1"><stop offset="0" stop-color="#ffffff"/><stop offset=".5" stop-color="#f6f2f0"/><stop offset="1" stop-color="#dccbc4"/></linearGradient></defs><path d="M0.5 0.5 L6.8 0.5 L9.8 3.5 L9.8 13.2 L0.5 13.2 Z" fill="url(#gd)" stroke="#cdcdcd" stroke-width="1"/><path d="M9.8 3.2 L9.8 13.3 L0.3 13.3" stroke="#4e4040" stroke-width="1.1" fill="none"/><path d="M6.8 1 L6.8 3.3 L9.3 3.3" stroke="#666" stroke-width="1.2" fill="none"/><text x="5.2" y="11.2" font-size="6" font-family="Liberation Sans" fill="#6a5a55" text-anchor="middle">i</text></svg>Notes de frais à payer</div>
<div class="t" style="left:1023.00px;width:60px;text-align:center;top:549.63px;font-size:16.5px;color:#1c2664;font-weight:400;">1</div>
<div class="b" style="left:1100px;top:552px;width:32px;height:17px;border-radius:3px;background:#a7471b;"></div>
<svg class="s" style="left:1105px;top:553px" width="15" height="14" viewBox="0 0 15 14"><path d="M7.5 1.2 L14.2 13 L0.8 13 Z" fill="#fff" stroke="#fff" stroke-width=".8" stroke-linejoin="round"/><rect x="6.8" y="5" width="1.5" height="4.2" fill="#7a3010"/><rect x="6.8" y="10.2" width="1.5" height="1.5" fill="#7a3010"/></svg>
<div class="t" style="left:1121px;top:556.69px;font-size:11px;color:#fff;font-weight:400;letter-spacing:-0.4px;">1</div>
<div class="b" style="left:963px;top:607px;width:697px;height:2px;background:#6b6b6b;"></div>
<div class="b" style="left:963px;top:609px;width:697px;height:39px;background:#e4e4e6;"></div>
<div class="b" style="left:963px;top:609px;width:697px;height:1px;background:#ebebed;"></div>
<div class="t" style="left:966px;top:621.00px;font-size:13px;color:#1a1a1a;font-weight:400;">Répartition des produits/services - Année: 2017</div>
<svg class="s" style="left:1607px;top:622px" width="11" height="9" viewBox="0 0 11 9"><rect x="0" y="0.5" width="11" height="1.6" fill="#222"/><rect x="2" y="3.7" width="7" height="1.6" fill="#222"/><rect x="4" y="6.9" width="3" height="1.6" fill="#222"/></svg>
<svg class="s" style="left:1628px;top:622px" width="9" height="9" viewBox="0 0 9 9"><rect x="0.0" y="0.0" width="1.7" height="1.7" fill="#5a5a5a"/><rect x="0.0" y="3.2" width="1.7" height="1.7" fill="#5a5a5a"/><rect x="0.0" y="6.4" width="1.7" height="1.7" fill="#5a5a5a"/><rect x="3.2" y="0.0" width="1.7" height="1.7" fill="#5a5a5a"/><rect x="3.2" y="3.2" width="1.7" height="1.7" fill="#5a5a5a"/><rect x="3.2" y="6.4" width="1.7" height="1.7" fill="#5a5a5a"/><rect x="6.4" y="0.0" width="1.7" height="1.7" fill="#5a5a5a"/><rect x="6.4" y="3.2" width="1.7" height="1.7" fill="#5a5a5a"/><rect x="6.4" y="6.4" width="1.7" height="1.7" fill="#5a5a5a"/></svg>
<svg class="s" style="left:1647px;top:622px" width="9" height="9" viewBox="0 0 9 9"><path d="M0.5 0.5 L8 8 M8 0.5 L0.5 8" stroke="#5a5a5a" stroke-width=".9"/></svg>
<div class="t" style="left:968.50px;width:340px;text-align:center;top:656.40px;font-size:13px;color:#333;font-weight:400;">Répartition des Produits/Services pour les Factures</div>
<div class="t" style="left:1314.50px;width:340px;text-align:center;top:656.40px;font-size:13px;color:#333;font-weight:400;">Répartition des Produits/Services pour les Propositions</div>
<div class="t" style="left:1314.50px;width:340px;text-align:center;top:671.40px;font-size:13px;color:#333;font-weight:400;">commerciales</div>
<div class="t" style="left:1112.00px;width:400px;text-align:center;top:878.00px;font-size:13px;color:#333;font-weight:400;">Répartition des Produits/Services pour les Commandes</div>
<svg class="s" style="left:0;top:0" width="1680" height="887"><path d="M1138.7 766 L1138.70 719.70 A46.3 46.3 0 0 1 1181.10 784.60 Z" fill="#8b6888" stroke="#fff" stroke-width="1.2" stroke-linejoin="round"/><path d="M1138.7 766 L1181.10 784.60 A46.3 46.3 0 0 1 1131.08 811.67 Z" fill="#12826e" stroke="#fff" stroke-width="1.2" stroke-linejoin="round"/><path d="M1138.7 766 L1131.08 811.67 A46.3 46.3 0 0 1 1092.56 769.82 Z" fill="#8a8cd8" stroke="#fff" stroke-width="1.2" stroke-linejoin="round"/><path d="M1138.7 766 L1092.56 769.82 A46.3 46.3 0 0 1 1110.26 729.46 Z" fill="#c47878" stroke="#fff" stroke-width="1.2" stroke-linejoin="round"/><path d="M1138.7 766 L1110.26 729.46 A46.3 46.3 0 0 1 1138.70 719.70 Z" fill="#c6be6c" stroke="#fff" stroke-width="1.2" stroke-linejoin="round"/></svg>
<div class="t" style="left:1096.6px;top:710.91px;font-size:10.5px;color:#111;font-weight:400;">DOLIC... 2</div>
<div class="t" style="left:1160.7px;top:724.21px;font-size:10.5px;color:#111;font-weight:400;">COMP-... 6</div>
<div class="t" style="left:1063.9px;top:740.31px;font-size:10.5px;color:#111;font-weight:400;">CAKEC... 3</div>
<div class="t" style="left:1074.6px;top:797.51px;font-size:10.5px;color:#111;font-weight:400;">DOLID... 4</div>
<div class="t" style="left:1138px;top:800.11px;font-size:10.5px;color:#111;font-weight:400;">APPLEPIE 4</div>
<div class="b" style="left:1421.5px;top:717.5px;width:127px;height:127px;border-radius:50%;background:#dcdcdc;"></div>
<div class="t" style="left:1454.50px;width:60px;text-align:center;top:848.11px;font-size:10.5px;color:#111;font-weight:400;">Aucun</div>
<svg class="s" style="left:1570px;top:26px" width="110" height="20" viewBox="0 0 110 20">
<path d="M13 3.5 C8.5 3.5 5.5 6 5.5 9 C5.5 11 7 12.6 9 13.5 L7 16.5 L12 14.3 C12.4 14.4 12.7 14.4 13 14.4 C17.5 14.4 20.5 11.9 20.5 9 C20.5 6 17.5 3.5 13 3.5 Z" fill="none" stroke="#fff" stroke-width="1.3"/>
<g fill="#fff"><path d="M31.5 4 Q35 2 38.5 4 L38.5 6 L31.5 6 Z"/><rect x="30" y="6.5" width="10" height="10" rx="3"/><path d="M28 7 L31 9 M42 7 L39 9 M27 11.5 L31 11.5 M43 11.5 L39 11.5 M28 16 L31 14 M42 16 L39 14" stroke="#fff" stroke-width="1.3"/></g>
<rect x="34.3" y="7" width="1.5" height="9.5" fill="#4e5a76"/>
<g fill="#fff"><rect x="52" y="3" width="8" height="6"/><path d="M49 8.5 L64 8.5 Q65.5 8.5 65.5 10 L65.5 15 L49 15 Q48.5 15 48.5 14 L48.5 9 Q48.5 8.5 49 8.5 Z"/><rect x="51.5" y="13" width="10.5" height="3.5" fill="#4e5a76"/><rect x="52.5" y="14" width="8.5" height="2.5"/></g>
<circle cx="78" cy="10.5" r="7" fill="#fff"/><text x="78" y="14.6" font-size="11" font-weight="700" font-family="Liberation Sans" fill="#4e5a76" text-anchor="middle">?</text>
<path d="M97 4.5 L93.5 4.5 L93.5 16.5 L97 16.5" fill="none" stroke="#fff" stroke-width="1.4"/><path d="M96 8 L100.5 8 L100.5 4 L106.5 10.5 L100.5 17 L100.5 13 L96 13 Z" fill="#fff"/>
</svg>
</div></body></html>
